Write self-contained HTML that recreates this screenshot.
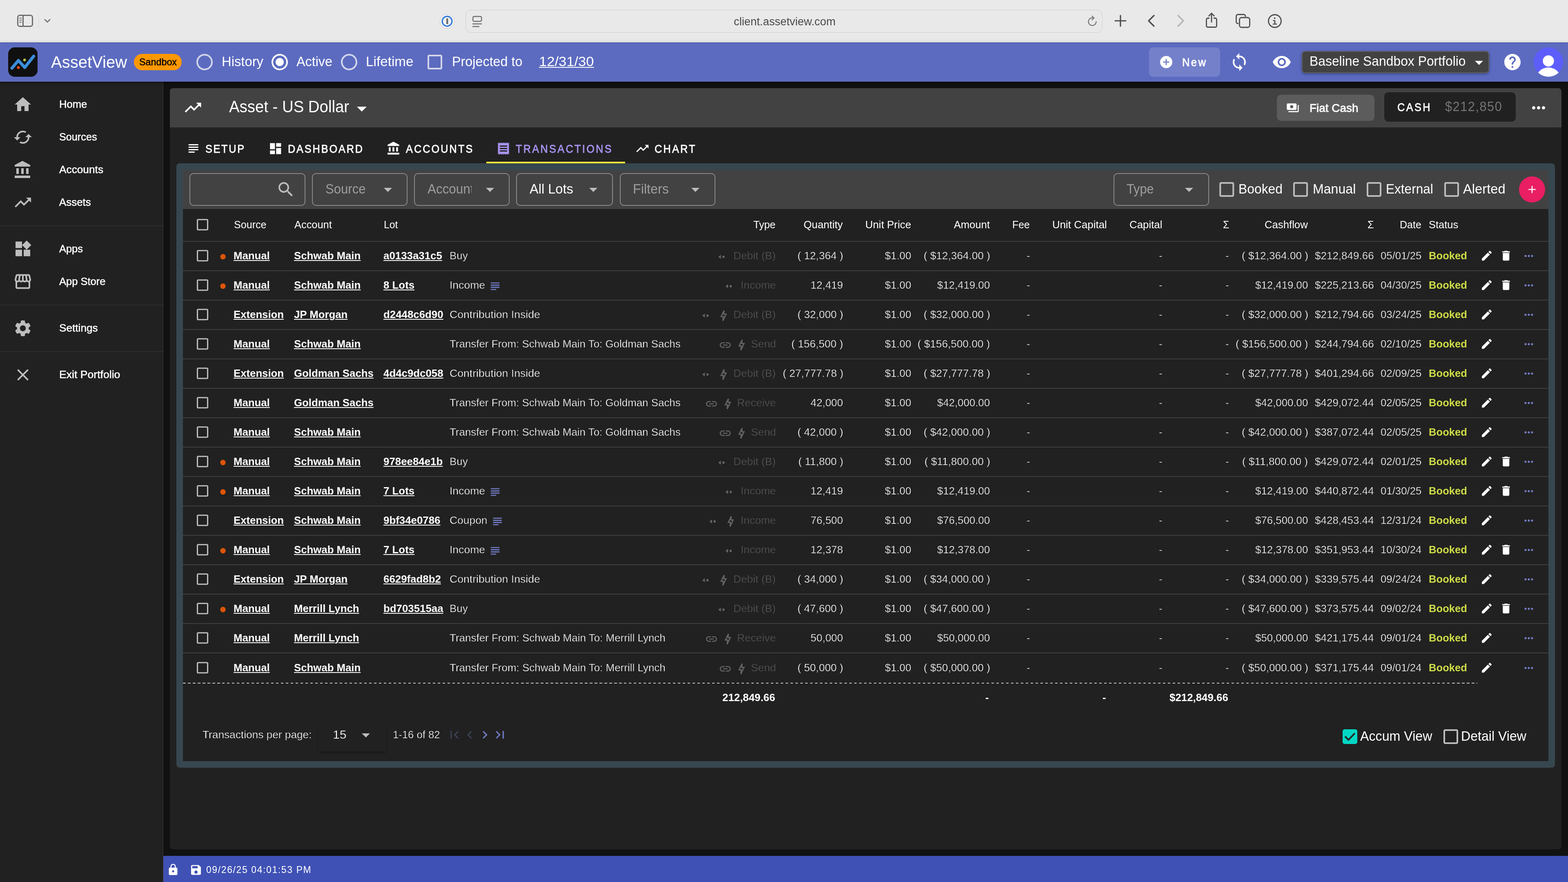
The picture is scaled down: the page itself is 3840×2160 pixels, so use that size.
<!DOCTYPE html>
<html lang="en"><head><meta charset="utf-8"><title>AssetView - Asset - US Dollar - Transactions</title>
<style>html,body{margin:0;padding:0;background:#111;}
body{width:3840px;height:2160px;overflow:hidden;font-family:"Liberation Sans",sans-serif;}
#root{position:relative;width:3840px;height:2160px;overflow:hidden;background:#111;will-change:transform;}
#root div,#root span,#root a,#root svg.i{position:absolute;white-space:nowrap;box-sizing:border-box;}
svg.i{display:block;}
#root .u{text-decoration:underline;text-underline-offset:2.3px;text-decoration-thickness:2.4px;}
.m{-webkit-text-stroke:0.55px currentColor;}
#root div,#root a{transform-origin:0 50%;}
.lt{-webkit-text-stroke:0.42px #212121;}
.ltb{-webkit-text-stroke:0.5px #3f51b5;}
.m2{-webkit-text-stroke:0.9px currentColor;}
</style></head>
<body>
<div id="root">
<div style="left:0px;top:0px;width:3840px;height:104px;background:#e9e9e9;"></div>
<svg class="i" style="left:38px;top:30px;width:48px;height:42px" viewBox="0 0 48 42" fill="none" stroke="#6e6e6e" stroke-width="3" stroke-linecap="round"><rect x="5.500" y="7.500" width="36" height="27" rx="5"/><path d="M18.500 8v26" /><path d="M10 14.500h4.500M10 19.500h4.500M10 24.500h4.500" stroke-width="2.200"/></svg>
<div style="left:94px;top:35px;width:1px;height:35px;background:#d4d4d4;"></div>
<svg class="i" style="left:106px;top:44px;width:20px;height:14px" viewBox="0 0 20 14" fill="none" stroke="#7a7a7a" stroke-width="3" stroke-linecap="round" stroke-linejoin="round"><path d="M4 4l6 6 6-6"/></svg>
<svg class="i" style="left:1077px;top:34px;width:36px;height:36px" viewBox="0 0 36 36"><circle cx="18" cy="18" r="17" fill="#fff" stroke="#bdbdbd" stroke-width="1"/><circle cx="18" cy="18" r="12" fill="#f2f2f2" stroke="#3a7fd6" stroke-width="3.500"/><rect x="16" y="11" width="4.500" height="14" rx="1" fill="#6b6b6b"/></svg>
<div style="left:1140px;top:24px;width:1560px;height:56px;background:#e9e9e9;border:1.500px solid #cdcdcd;border-radius:14px;"></div>
<svg class="i" style="left:1154px;top:36px;width:30px;height:32px" viewBox="0 0 30 32" fill="none" stroke="#6e6e6e" stroke-width="2.400" stroke-linecap="round"><rect x="4.200" y="4.200" width="21" height="12" rx="3"/><path d="M4 22.500h21M4 29h15"/></svg>
<div style="left:1796.80px;top:40px;font-size:27px;line-height:27px;color:#4a4a4a;transform:scaleX(1.0126);">client.assetview.com</div>
<svg class="i" style="left:2660px;top:37px;width:30px;height:30px" viewBox="0 0 30 30" fill="none" stroke="#7a7a7a" stroke-width="2.400" stroke-linecap="round" stroke-linejoin="round"><path d="M24.500 16a9.500 9.500 0 1 1-5.500-8.600"/><path d="M14.500 2.500l5 4.700-5.200 4.300"/></svg>
<svg class="i" style="left:2726px;top:33px;width:36px;height:36px" viewBox="0 0 36 36" fill="none" stroke="#4d4d4d" stroke-width="3.200" stroke-linecap="round"><path d="M18 5v26M5 18h26"/></svg>
<svg class="i" style="left:2804px;top:33px;width:32px;height:36px" viewBox="0 0 32 36" fill="none" stroke="#4d4d4d" stroke-width="3.400" stroke-linecap="round" stroke-linejoin="round"><path d="M22 5L9 18l13 13"/></svg>
<svg class="i" style="left:2875px;top:33px;width:32px;height:36px" viewBox="0 0 32 36" fill="none" stroke="#b4b4b4" stroke-width="3.400" stroke-linecap="round" stroke-linejoin="round"><path d="M10 5l13 13-13 13"/></svg>
<svg class="i" style="left:2948px;top:29px;width:38px;height:42px" viewBox="0 0 38 42" fill="none" stroke="#4d4d4d" stroke-width="2.800" stroke-linecap="round" stroke-linejoin="round"><path d="M13 15.500H9.500a3 3 0 0 0-3 3v16a3 3 0 0 0 3 3h19a3 3 0 0 0 3-3v-16a3 3 0 0 0-3-3H25"/><path d="M19 25V4M12.500 10L19 3.500 25.500 10"/></svg>
<svg class="i" style="left:3023px;top:31px;width:42px;height:40px" viewBox="0 0 42 40" fill="none" stroke="#4d4d4d" stroke-width="2.800" stroke-linejoin="round" stroke-linecap="round"><path d="M9 26.500H8.500a4 4 0 0 1-4-4V8.500a4 4 0 0 1 4-4H23a4 4 0 0 1 4 4V9"/><rect x="12.500" y="12" width="25" height="24" rx="5"/></svg>
<svg class="i" style="left:3103px;top:33px;width:38px;height:38px" viewBox="0 0 38 38" fill="none" stroke="#4d4d4d" stroke-width="2.800" stroke-linecap="round"><circle cx="19" cy="18.500" r="15.500"/><path d="M19 17.500v8.500M15.500 17.500H19M15 26h8" stroke-width="2.600"/><circle cx="18.700" cy="11.500" r="1.900" fill="#4d4d4d" stroke="none"/></svg>
<div style="left:0px;top:200px;width:400px;height:1960px;background:#212121;border-right:1.500px solid #3a3a3a;"></div>
<div style="left:416px;top:216px;width:3408px;height:1864px;background:#212121;border-radius:8px;"></div>
<div style="left:416px;top:216px;width:3408px;height:96px;background:#424242;border-radius:8px 8px 0 0;"></div>
<div style="left:0px;top:104px;width:3840px;height:96px;background:#5c6bc0;border-top:2px solid #4a59ae;box-shadow:0 3px 8px rgba(0,0,0,.5);"></div>
<div style="left:20px;top:116px;width:72px;height:72px;background:#101010;border-radius:16px;"></div>
<svg class="i" style="left:20px;top:116px;width:72px;height:72px" viewBox="20 116 72 72" fill="none"><path d="M29.300 166.800L45 148l15.600 17.200L82.500 137.600" stroke="#3b8edb" stroke-width="7.400" stroke-linecap="round" stroke-linejoin="round"/><circle cx="60.200" cy="146.800" r="3.400" fill="#b9c34e"/><circle cx="45" cy="165.400" r="3.400" fill="#ff4f1c"/></svg>
<div style="left:125.00px;top:132px;font-size:40px;line-height:40px;color:#fff;">AssetView</div>
<div style="left:328px;top:132px;width:117px;height:40px;background:#ff9800;border-radius:20px;"></div>
<div class="m" style="left:340.50px;top:140px;font-size:24px;line-height:24px;color:#000;transform:scaleX(0.9711);">Sandbox</div>
<svg class="i" style="left:477px;top:128px;width:48px;height:48px;fill:#d3d5ea;" viewBox="0 0 48 48"><path transform="translate(0.000 0.000) scale(2.00000)" d="M12 2C6.480 2 2 6.480 2 12s4.480 10 10 10 10-4.480 10-10S17.520 2 12 2zm0 18c-4.420 0-8-3.580-8-8s3.580-8 8-8 8 3.580 8 8-3.580 8-8 8z"/></svg>
<div style="left:542.50px;top:134px;font-size:33px;line-height:33px;color:#fff;transform:scaleX(0.9935);">History</div>
<svg class="i" style="left:661px;top:128px;width:48px;height:48px;fill:#fff;" viewBox="0 0 48 48"><path transform="translate(0.000 0.000) scale(2.00000)" d="M12 7c-2.760 0-5 2.240-5 5s2.240 5 5 5 5-2.240 5-5-2.240-5-5-5zm0-5C6.480 2 2 6.480 2 12s4.480 10 10 10 10-4.480 10-10S17.520 2 12 2zm0 18c-4.420 0-8-3.580-8-8s3.580-8 8-8 8 3.580 8 8-3.580 8-8 8z"/></svg>
<div style="left:726.00px;top:134px;font-size:33px;line-height:33px;color:#fff;transform:scaleX(0.9793);">Active</div>
<svg class="i" style="left:831px;top:128px;width:48px;height:48px;fill:#d3d5ea;" viewBox="0 0 48 48"><path transform="translate(0.000 0.000) scale(2.00000)" d="M12 2C6.480 2 2 6.480 2 12s4.480 10 10 10 10-4.480 10-10S17.520 2 12 2zm0 18c-4.420 0-8-3.580-8-8s3.580-8 8-8 8 3.580 8 8-3.580 8-8 8z"/></svg>
<div style="left:896.00px;top:134px;font-size:33px;line-height:33px;color:#fff;transform:scaleX(1.0083);">Lifetime</div>
<svg class="i" style="left:1041px;top:128px;width:48px;height:48px;fill:#d3d5ea;" viewBox="0 0 48 48"><path transform="translate(0.000 0.000) scale(2.00000)" d="M19 5v14H5V5h14m0-2H5c-1.100 0-2 .9-2 2v14c0 1.100.9 2 2 2h14c1.100 0 2-.9 2-2V5c0-1.100-.9-2-2-2z"/></svg>
<div style="left:1107.00px;top:134px;font-size:33px;line-height:33px;color:#fff;transform:scaleX(0.9796);">Projected to</div>
<div class="u" style="left:1319.50px;top:134px;font-size:33px;line-height:33px;color:#fff;transform:scaleX(1.0472);">12/31/30</div>
<div style="left:2814px;top:116px;width:174px;height:72px;background:#7480ca;border-radius:10px;"></div>
<svg class="i" style="left:2838px;top:134px;width:36px;height:36px;fill:#fff;" viewBox="0 0 36 36"><path transform="translate(0.000 0.000) scale(1.50000)" d="M12 2C6.480 2 2 6.480 2 12s4.480 10 10 10 10-4.480 10-10S17.520 2 12 2zm5 11h-4v4h-2v-4H7v-2h4V7h2v4h4v2z"/></svg>
<div class="m2" style="left:2894.50px;top:139px;font-size:28px;line-height:28px;color:#fff;letter-spacing:3.515px;transform:scaleX(0.9200);">New</div>
<svg class="i" style="left:3011px;top:128px;width:48px;height:48px;fill:#fff;" viewBox="0 0 48 48"><path transform="translate(0.000 0.000) scale(2.00000)" d="M12 4V1L8 5l4 4V6c3.310 0 6 2.690 6 6 0 1.010-.25 1.970-.7 2.800l1.460 1.460C19.540 15.030 20 13.570 20 12c0-4.420-3.580-8-8-8zm0 14c-3.310 0-6-2.690-6-6 0-1.010.25-1.970.7-2.800L5.240 7.740C4.460 8.970 4 10.430 4 12c0 4.420 3.580 8 8 8v3l4-4-4-4v3z"/></svg>
<svg class="i" style="left:3115px;top:128px;width:48px;height:48px;fill:#fff;" viewBox="0 0 48 48"><path transform="translate(0.000 0.000) scale(2.00000)" d="M12 4.500C7 4.500 2.730 7.610 1 12c1.730 4.390 6 7.500 11 7.500s9.270-3.110 11-7.500c-1.730-4.390-6-7.500-11-7.500zM12 17c-2.760 0-5-2.240-5-5s2.240-5 5-5 5 2.240 5 5-2.240 5-5 5zm0-8c-1.660 0-3 1.340-3 3s1.340 3 3 3 3-1.340 3-3-1.340-3-3-3z"/></svg>
<div style="left:3188px;top:125px;width:459px;height:54px;background:#424242;border-radius:8px;border:2px solid #5e5e5e;box-shadow:0 2px 6px rgba(0,0,0,.4);"></div>
<div style="left:3206.50px;top:133px;font-size:33px;line-height:33px;color:#fff;transform:scaleX(0.9653);">Baseline Sandbox Portfolio</div>
<svg class="i" style="left:3598px;top:129px;width:48px;height:48px;fill:#fff;" viewBox="0 0 48 48"><path transform="translate(0.000 0.000) scale(2.00000)" d="M7 10l5 5 5-5z"/></svg>
<svg class="i" style="left:3680px;top:128px;width:48px;height:48px;fill:#fff;" viewBox="0 0 48 48"><path transform="translate(0.000 0.000) scale(2.00000)" d="M12 2C6.480 2 2 6.480 2 12s4.480 10 10 10 10-4.480 10-10S17.520 2 12 2zm1 17h-2v-2h2v2zm2.070-7.750l-.9.92C13.450 12.900 13 13.500 13 15h-2v-.5c0-1.100.45-2.100 1.170-2.830l1.240-1.260c.37-.36.59-.86.59-1.410 0-1.100-.9-2-2-2s-2 .9-2 2H8c0-2.210 1.790-4 4-4s4 1.790 4 4c0 .88-.36 1.680-.93 2.250z"/></svg>
<div style="left:3756px;top:116px;width:72px;height:72px;background:#5d5dfc;border-radius:50%;overflow:hidden;"><svg class="i" style="left:0;top:0;width:72px;height:72px;fill:#fff" viewBox="0 0 72 72"><circle cx="36" cy="33.200" r="13.700"/><ellipse cx="36" cy="74.500" rx="29" ry="25.200"/></svg></div>
<svg class="i" style="left:32px;top:232px;width:48px;height:48px;fill:#bdbdbd;" viewBox="0 0 48 48"><path transform="translate(0.000 0.000) scale(2.00000)" d="M10 20v-6h4v6h5v-8h3L12 3 2 12h3v8z"/></svg>
<div class="m" style="left:144.80px;top:242px;font-size:26px;line-height:26px;color:#fff;transform:scaleX(0.9834);">Home</div>
<svg class="i" style="left:32px;top:312px;width:48px;height:48px;fill:#bdbdbd;" viewBox="0 0 48 48"><path transform="translate(0.000 0.000) scale(2.00000)" d="M19 8l-4 4h3c0 3.31-2.69 6-6 6-1.01 0-1.97-.25-2.8-.7l-1.46 1.46C8.97 19.54 10.43 20 12 20c4.42 0 8-3.58 8-8h3l-4-4zM6 12c0-3.31 2.69-6 6-6 1.01 0 1.97.25 2.8.7l1.46-1.46C15.03 4.46 13.57 4 12 4c-4.42 0-8 3.58-8 8H1l4 4 4-4H6z"/></svg>
<div class="m" style="left:144.80px;top:322px;font-size:26px;line-height:26px;color:#fff;transform:scaleX(0.9699);">Sources</div>
<svg class="i" style="left:32px;top:392px;width:48px;height:48px;fill:#bdbdbd;" viewBox="0 0 48 48"><path transform="translate(0.000 0.000) scale(2.00000)" d="M4 10v7h3v-7H4zm6 0v7h3v-7h-3zM2 22h19v-3H2v3zm14-12v7h3v-7h-3zm-4.500-9L2 6v2h19V6l-9.500-5z"/></svg>
<div class="m" style="left:144.80px;top:402px;font-size:26px;line-height:26px;color:#fff;transform:scaleX(1.0099);">Accounts</div>
<svg class="i" style="left:32px;top:472px;width:48px;height:48px;fill:#bdbdbd;" viewBox="0 0 48 48"><path transform="translate(0.000 0.000) scale(2.00000)" d="M16 6l2.290 2.290-4.880 4.880-4-4L2 16.590 3.410 18l6-6 4 4 6.300-6.290L22 12V6z"/></svg>
<div class="m" style="left:144.80px;top:482px;font-size:26px;line-height:26px;color:#fff;">Assets</div>
<svg class="i" style="left:32px;top:585px;width:48px;height:49px;fill:#bdbdbd;" viewBox="0 0 48 49"><path transform="translate(0.000 0.500) scale(2.00000)" d="M13 13v8h8v-8h-8zM3 21h8v-8H3v8zM3 3v8h8V3H3zm13.660-1.310L11 7.340 16.660 13l5.660-5.660-5.660-5.650z"/></svg>
<div class="m" style="left:144.50px;top:596px;font-size:26px;line-height:26px;color:#fff;transform:scaleX(0.9787);">Apps</div>
<svg class="i" style="left:32px;top:665px;width:48px;height:49px;fill:#bdbdbd;" viewBox="0 0 48 49"><path transform="translate(0.000 0.500) scale(2.00000)" d="M21.900 8.890l-1.050-4.370c-.22-.9-1-1.520-1.910-1.520H5.050c-.9 0-1.690.63-1.900 1.520L2.100 8.890c-.24 1.020-.02 2.060.62 2.880.08.11.19.19.28.29V19c0 1.100.9 2 2 2h14c1.100 0 2-.9 2-2v-6.940c.09-.09.2-.18.28-.28.64-.82.87-1.870.62-2.890zm-2.990-3.900l1.050 4.370c.1.42.01.84-.25 1.170-.14.18-.44.47-.94.47-.61 0-1.140-.49-1.210-1.140L16.980 5l1.930-.01zM13 5h1.960l.54 4.520c.05.39-.07.78-.33 1.070-.22.26-.54.41-.95.41-.67 0-1.220-.59-1.220-1.310V5zM8.490 9.520L9.040 5H11v4.690c0 .72-.55 1.310-1.290 1.310-.34 0-.65-.15-.89-.41-.25-.29-.37-.68-.33-1.070zm-4.450-.16L5.050 5h1.970l-.58 4.860c-.08.65-.6 1.140-1.210 1.140-.49 0-.8-.29-.93-.47-.27-.32-.36-.75-.26-1.170zM5 19v-6.030c.08.01.15.03.23.03.87 0 1.660-.36 2.240-.95.6.6 1.400.95 2.310.95.87 0 1.650-.36 2.230-.93.59.57 1.390.93 2.290.93.84 0 1.640-.35 2.240-.95.58.59 1.370.95 2.240.95.08 0 .15-.02.23-.03V19H5z"/></svg>
<div class="m" style="left:144.50px;top:676px;font-size:26px;line-height:26px;color:#fff;transform:scaleX(0.9816);">App Store</div>
<svg class="i" style="left:32px;top:780px;width:48px;height:48px;fill:#bdbdbd;" viewBox="0 0 48 48"><path transform="translate(0.000 0.000) scale(2.00000)" d="M19.140 12.940c.04-.3.06-.61.06-.94 0-.32-.02-.64-.07-.94l2.030-1.580c.18-.14.23-.41.12-.61l-1.920-3.320c-.12-.22-.37-.29-.59-.22l-2.390.96c-.5-.38-1.030-.7-1.620-.94l-.36-2.540c-.04-.24-.24-.41-.48-.41h-3.840c-.24 0-.43.17-.47.41l-.36 2.540c-.59.24-1.130.57-1.620.94l-2.390-.96c-.22-.08-.47 0-.59.22L2.740 8.870c-.12.21-.08.47.12.61l2.030 1.580c-.05.3-.09.63-.09.94s.02.64.07.94l-2.030 1.580c-.18.14-.23.41-.12.61l1.920 3.320c.12.22.37.29.59.22l2.390-.96c.5.38 1.030.7 1.620.94l.36 2.540c.05.24.24.41.48.41h3.840c.24 0 .44-.17.47-.41l.36-2.540c.59-.24 1.130-.56 1.620-.94l2.390.96c.22.08.47 0 .59-.22l1.920-3.320c.12-.22.07-.47-.12-.61l-2.010-1.580zM12 15.600c-1.980 0-3.600-1.620-3.600-3.600s1.620-3.600 3.600-3.600 3.600 1.620 3.600 3.600-1.620 3.600-3.600 3.600z"/></svg>
<div class="m" style="left:144.50px;top:790px;font-size:26px;line-height:26px;color:#fff;transform:scaleX(1.0081);">Settings</div>
<svg class="i" style="left:32px;top:894px;width:48px;height:48px;fill:#bdbdbd;" viewBox="0 0 48 48"><path transform="translate(0.000 0.000) scale(2.00000)" d="M19 6.410L17.590 5 12 10.590 6.410 5 5 6.410 10.590 12 5 17.590 6.410 19 12 13.410 17.590 19 19 17.590 13.410 12z"/></svg>
<div class="m" style="left:144.50px;top:904px;font-size:26px;line-height:26px;color:#fff;transform:scaleX(1.0237);">Exit Portfolio</div>
<div style="left:0px;top:552px;width:399px;height:2px;background:#2d2d2d;"></div>
<div style="left:0px;top:746px;width:399px;height:2px;background:#2d2d2d;"></div>
<div style="left:0px;top:860px;width:399px;height:2px;background:#2d2d2d;"></div>
<svg class="i" style="left:448px;top:239px;width:49px;height:49px;fill:#fff;" viewBox="0 0 49 49"><path transform="translate(0.500 0.500) scale(2.00000)" d="M16 6l2.290 2.290-4.880 4.880-4-4L2 16.590 3.410 18l6-6 4 4 6.300-6.290L22 12V6z"/></svg>
<div style="left:561.00px;top:241px;font-size:40px;line-height:40px;color:#fff;transform:scaleX(0.9585);">Asset - US Dollar</div>
<svg class="i" style="left:857px;top:237px;width:58px;height:58px;fill:#fff;" viewBox="0 0 58 58"><path transform="translate(0.200 0.200) scale(2.40000)" d="M7 10l5 5 5-5z"/></svg>
<div style="left:3127px;top:232px;width:239px;height:64px;background:#5c5c5c;border-radius:10px;"></div>
<svg class="i" style="left:3150px;top:248px;width:32px;height:32px;fill:#fff;" viewBox="0 0 32 32"><path transform="translate(0.000 0.000) scale(1.33333)" d="M19 14V6c0-1.100-.9-2-2-2H3c-1.100 0-2 .9-2 2v8c0 1.100.9 2 2 2h14c1.100 0 2-.9 2-2zm-9-1c-1.660 0-3-1.340-3-3s1.340-3 3-3 3 1.340 3 3-1.340 3-3 3zm13-6v11c0 1.100-.9 2-2 2H4v-2h17V7h2z"/></svg>
<div class="m2" style="left:3207.00px;top:251px;font-size:28px;line-height:28px;color:#fff;transform:scaleX(0.9974);">Fiat Cash</div>
<div style="left:3390px;top:226px;width:322px;height:72px;background:#212121;border-radius:10px;"></div>
<div class="m2" style="left:3422.30px;top:249px;font-size:28px;line-height:28px;color:#fff;letter-spacing:3.883px;transform:scaleX(0.9000);">CASH</div>
<div style="left:3538.70px;top:244px;font-size:33px;line-height:33px;color:#757575;letter-spacing:1.645px;transform:scaleX(0.9300);">$212,850</div>
<svg class="i" style="left:3744px;top:240px;width:48px;height:48px;fill:#fff;" viewBox="0 0 48 48"><path transform="translate(0.000 0.000) scale(2.00000)" d="M6 10c-1.100 0-2 .9-2 2s.9 2 2 2 2-.9 2-2-.9-2-2-2zm12 0c-1.100 0-2 .9-2 2s.9 2 2 2 2-.9 2-2-.9-2-2-2zm-6 0c-1.100 0-2 .9-2 2s.9 2 2 2 2-.9 2-2-.9-2-2-2z"/></svg>
<svg class="i" style="left:455px;top:345px;width:37px;height:37px;fill:#fff;" viewBox="0 0 37 37"><path transform="translate(0.750 0.500) scale(1.50000)" d="M14 17H4v2h10v-2zm6-8H4v2h16V9zM4 15h16v-2H4v2zM4 5v2h16V5H4z"/></svg>
<div class="m2" style="left:503.00px;top:351px;font-size:28px;line-height:28px;color:#fff;letter-spacing:3.050px;transform:scaleX(0.9000);">SETUP</div>
<svg class="i" style="left:656px;top:346px;width:37px;height:36px;fill:#fff;" viewBox="0 0 37 36"><path transform="translate(0.800 0.000) scale(1.50000)" d="M3 13h8V3H3v10zm0 8h8v-6H3v6zm10 0h8V11h-8v10zm0-18v6h8V3h-8z"/></svg>
<div class="m2" style="left:704.50px;top:351px;font-size:28px;line-height:28px;color:#fff;letter-spacing:3.245px;transform:scaleX(0.9000);">DASHBOARD</div>
<svg class="i" style="left:946px;top:345px;width:37px;height:37px;fill:#fff;" viewBox="0 0 37 37"><path transform="translate(0.200 0.500) scale(1.50000)" d="M4 10v7h3v-7H4zm6 0v7h3v-7h-3zM2 22h19v-3H2v3zm14-12v7h3v-7h-3zm-4.500-9L2 6v2h19V6l-9.500-5z"/></svg>
<div class="m2" style="left:993.75px;top:351px;font-size:28px;line-height:28px;color:#fff;letter-spacing:3.467px;transform:scaleX(0.9000);">ACCOUNTS</div>
<svg class="i" style="left:1215px;top:345px;width:36px;height:37px;fill:#a892ee;" viewBox="0 0 36 37"><path transform="translate(0.000 0.750) scale(1.50000)" d="M18 17H6v-2h12v2zm0-4H6v-2h12v2zm0-4H6V7h12v2zM3 22l1.500-1.500L6 22l1.500-1.500L9 22l1.500-1.500L12 22l1.500-1.500L15 22l1.500-1.500L18 22l1.500-1.500L21 22V2l-1.500 1.500L18 2l-1.500 1.500L15 2l-1.500 1.500L12 2l-1.500 1.500L9 2 7.500 3.500 6 2 4.500 3.500 3 2v20z"/></svg>
<div class="m2" style="left:1262.50px;top:351px;font-size:28px;line-height:28px;color:#a892ee;letter-spacing:3.746px;transform:scaleX(0.9000);">TRANSACTIONS</div>
<svg class="i" style="left:1555px;top:345px;width:37px;height:37px;fill:#fff;" viewBox="0 0 37 37"><path transform="translate(0.200 0.750) scale(1.50000)" d="M16 6l2.290 2.290-4.880 4.880-4-4L2 16.590 3.410 18l6-6 4 4 6.300-6.290L22 12V6z"/></svg>
<div class="m2" style="left:1602.50px;top:351px;font-size:28px;line-height:28px;color:#fff;letter-spacing:3.655px;transform:scaleX(0.9000);">CHART</div>
<div style="left:1190.75px;top:396px;width:340.25px;height:4px;background:#ffeb3b;"></div>
<div style="left:432px;top:400px;width:3376px;height:1480px;background:#37474f;border-radius:8px;"></div>
<div style="left:448px;top:416px;width:3344px;height:1448px;background:#212121;"></div>
<div style="left:448px;top:416px;width:3344px;height:96px;background:#424242;"></div>
<div style="left:464px;top:424px;width:284px;height:80px;border:2px solid #8a8a8a;border-radius:10px;"></div>
<svg class="i" style="left:676px;top:440px;width:48px;height:48px;fill:#bdbdbd;" viewBox="0 0 48 48"><path transform="translate(0.000 0.000) scale(2.00000)" d="M15.500 14h-.79l-.28-.27C15.410 12.590 16 11.110 16 9.500 16 5.910 13.090 3 9.500 3S3 5.910 3 9.500 5.910 16 9.500 16c1.610 0 3.090-.59 4.230-1.570l.27.28v.79l5 4.990L20.490 19l-4.990-5zm-6 0C7.010 14 5 11.990 5 9.500S7.010 5 9.500 5 14 7.010 14 9.500 11.990 14 9.500 14z"/></svg>
<div style="left:764px;top:424px;width:234px;height:80px;border:2px solid #8a8a8a;border-radius:10px;"></div>
<div style="left:797.00px;top:446px;font-size:33px;line-height:33px;color:#9e9e9e;transform:scaleX(0.9421);">Source</div>
<svg class="i" style="left:926px;top:440px;width:48px;height:48px;fill:#bdbdbd;" viewBox="0 0 48 48"><path transform="translate(0.000 0.000) scale(2.00000)" d="M7 10l5 5 5-5z"/></svg>
<div style="left:1014px;top:424px;width:234px;height:80px;border:2px solid #8a8a8a;border-radius:10px;"></div>
<div style="left:1044.6px;top:430px;width:110.6px;height:68px;overflow:hidden">
<div style="left:2.00px;top:16px;font-size:33px;line-height:33px;color:#9e9e9e;transform:scaleX(0.9519);">Account</div>
</div>
<svg class="i" style="left:1176px;top:440px;width:48px;height:48px;fill:#bdbdbd;" viewBox="0 0 48 48"><path transform="translate(0.000 0.000) scale(2.00000)" d="M7 10l5 5 5-5z"/></svg>
<div style="left:1264px;top:424px;width:236.5px;height:80px;border:2px solid #8a8a8a;border-radius:10px;"></div>
<div style="left:1297.00px;top:446px;font-size:33px;line-height:33px;color:#fff;transform:scaleX(0.9860);">All Lots</div>
<svg class="i" style="left:1429px;top:440px;width:48px;height:48px;fill:#bdbdbd;" viewBox="0 0 48 48"><path transform="translate(0.000 0.000) scale(2.00000)" d="M7 10l5 5 5-5z"/></svg>
<div style="left:1517.5px;top:424px;width:234px;height:80px;border:2px solid #8a8a8a;border-radius:10px;"></div>
<div style="left:1550.30px;top:446px;font-size:33px;line-height:33px;color:#9e9e9e;transform:scaleX(0.9797);">Filters</div>
<svg class="i" style="left:1679px;top:440px;width:48px;height:48px;fill:#bdbdbd;" viewBox="0 0 48 48"><path transform="translate(0.000 0.000) scale(2.00000)" d="M7 10l5 5 5-5z"/></svg>
<div style="left:2726.5px;top:424px;width:234px;height:80px;border:2px solid #8a8a8a;border-radius:10px;"></div>
<div style="left:2759.30px;top:446px;font-size:33px;line-height:33px;color:#9e9e9e;transform:scaleX(0.9296);">Type</div>
<svg class="i" style="left:2888px;top:440px;width:48px;height:48px;fill:#bdbdbd;" viewBox="0 0 48 48"><path transform="translate(0.000 0.000) scale(2.00000)" d="M7 10l5 5 5-5z"/></svg>
<svg class="i" style="left:2980px;top:440px;width:49px;height:48px;fill:#bdbdbd;" viewBox="0 0 49 48"><path transform="translate(0.300 0.000) scale(2.00000)" d="M19 5v14H5V5h14m0-2H5c-1.100 0-2 .9-2 2v14c0 1.100.9 2 2 2h14c1.100 0 2-.9 2-2V5c0-1.100-.9-2-2-2z"/></svg>
<div style="left:3033.00px;top:446px;font-size:33px;line-height:33px;color:#fff;transform:scaleX(0.9650);">Booked</div>
<svg class="i" style="left:3161px;top:440px;width:48px;height:48px;fill:#bdbdbd;" viewBox="0 0 48 48"><path transform="translate(0.000 0.000) scale(2.00000)" d="M19 5v14H5V5h14m0-2H5c-1.100 0-2 .9-2 2v14c0 1.100.9 2 2 2h14c1.100 0 2-.9 2-2V5c0-1.100-.9-2-2-2z"/></svg>
<div style="left:3214.70px;top:446px;font-size:33px;line-height:33px;color:#fff;transform:scaleX(0.9730);">Manual</div>
<svg class="i" style="left:3341px;top:440px;width:48px;height:48px;fill:#bdbdbd;" viewBox="0 0 48 48"><path transform="translate(0.000 0.000) scale(2.00000)" d="M19 5v14H5V5h14m0-2H5c-1.100 0-2 .9-2 2v14c0 1.100.9 2 2 2h14c1.100 0 2-.9 2-2V5c0-1.100-.9-2-2-2z"/></svg>
<div style="left:3394.00px;top:446px;font-size:33px;line-height:33px;color:#fff;transform:scaleX(0.9566);">External</div>
<svg class="i" style="left:3531px;top:440px;width:48px;height:48px;fill:#bdbdbd;" viewBox="0 0 48 48"><path transform="translate(0.000 0.000) scale(2.00000)" d="M19 5v14H5V5h14m0-2H5c-1.100 0-2 .9-2 2v14c0 1.100.9 2 2 2h14c1.100 0 2-.9 2-2V5c0-1.100-.9-2-2-2z"/></svg>
<div style="left:3583.40px;top:446px;font-size:33px;line-height:33px;color:#fff;transform:scaleX(0.9909);">Alerted</div>
<div style="left:3720px;top:432px;width:64px;height:64px;background:#e91e63;border-radius:50%;"></div>
<svg class="i" style="left:3740px;top:452px;width:24px;height:24px" viewBox="0 0 24 24" fill="none" stroke="#fff" stroke-width="2.600"><path d="M12 3.200v17.600M3.200 12h17.600"/></svg>
<svg class="i" style="left:477px;top:531px;width:38px;height:38px;fill:#bdbdbd;" viewBox="0 0 38 38"><path transform="translate(0.250 0.500) scale(1.56250)" d="M19 5v14H5V5h14m0-2H5c-1.100 0-2 .9-2 2v14c0 1.100.9 2 2 2h14c1.100 0 2-.9 2-2V5c0-1.100-.9-2-2-2z"/></svg>
<div style="left:573.00px;top:537px;font-size:26px;line-height:26px;color:#fff;transform:scaleX(0.9651);">Source</div>
<div style="left:720.75px;top:537px;font-size:26px;line-height:26px;color:#fff;transform:scaleX(0.9767);">Account</div>
<div style="left:940.00px;top:537px;font-size:26px;line-height:26px;color:#fff;transform:scaleX(0.9546);">Lot</div>
<div style="left:1845.20px;top:537px;font-size:26px;line-height:26px;color:#fff;transform:scaleX(0.9616);">Type</div>
<div style="left:1968.00px;top:537px;font-size:26px;line-height:26px;color:#fff;transform:scaleX(0.9915);">Quantity</div>
<div style="left:2119.00px;top:537px;font-size:26px;line-height:26px;color:#fff;transform:scaleX(0.9965);">Unit Price</div>
<div style="left:2336.00px;top:537px;font-size:26px;line-height:26px;color:#fff;transform:scaleX(0.9822);">Amount</div>
<div style="left:2479.30px;top:537px;font-size:26px;line-height:26px;color:#fff;transform:scaleX(0.9532);">Fee</div>
<div style="left:2577.00px;top:537px;font-size:26px;line-height:26px;color:#fff;transform:scaleX(0.9956);">Unit Capital</div>
<div style="left:2765.50px;top:537px;font-size:26px;line-height:26px;color:#fff;transform:scaleX(0.9947);">Capital</div>
<div style="left:2994.70px;top:537px;font-size:26px;line-height:26px;color:#fff;transform:scaleX(0.9520);">Σ</div>
<div style="left:3097.00px;top:537px;font-size:26px;line-height:26px;color:#fff;transform:scaleX(0.9885);">Cashflow</div>
<div style="left:3349.00px;top:537px;font-size:26px;line-height:26px;color:#fff;transform:scaleX(0.9582);">Σ</div>
<div style="left:3427.50px;top:537px;font-size:26px;line-height:26px;color:#fff;transform:scaleX(0.9651);">Date</div>
<div style="left:3498.70px;top:537px;font-size:26px;line-height:26px;color:#fff;transform:scaleX(0.9809);">Status</div>
<div style="left:448px;top:590px;width:3344px;height:2px;background:#3f3f3f;"></div>
<svg class="i" style="left:477px;top:607px;width:38px;height:38px;fill:#bdbdbd;" viewBox="0 0 38 38"><path transform="translate(0.250 0.450) scale(1.56250)" d="M19 5v14H5V5h14m0-2H5c-1.100 0-2 .9-2 2v14c0 1.100.9 2 2 2h14c1.100 0 2-.9 2-2V5c0-1.100-.9-2-2-2z"/></svg>
<svg class="i" style="left:536px;top:618px;width:20px;height:22px" viewBox="0 0 20 22"><circle cx="10" cy="10.75" r="6.700" fill="#dc5508"/></svg>
<a class="u" style="left:571.70px;top:614px;font-size:25px;line-height:25px;color:#fff;font-weight:700;transform:scaleX(1.0300);">Manual</a>
<a class="u" style="left:719.50px;top:614px;font-size:25px;line-height:25px;color:#fff;font-weight:700;transform:scaleX(1.0310);">Schwab Main</a>
<a class="u" style="left:938.50px;top:614px;font-size:25px;line-height:25px;color:#fff;font-weight:700;transform:scaleX(1.0340);">a0133a31c5</a>
<div class="lt" style="left:1101.30px;top:614px;font-size:25px;line-height:25px;color:#ffffff;transform:scaleX(1.0360);">Buy</div>
<div class="lt" style="left:1796.44px;top:614px;font-size:25px;line-height:25px;color:#565656;transform:scaleX(1.0520);">Debit (B)</div>
<svg class="i" style="left:1757px;top:621px;width:22px;height:18px" viewBox="0 0 22 18" fill="#646464"><g transform="translate(0.19 0.00)"><path d="M8.200 3v10L2 8z"/><circle cx="14.600" cy="8" r="2.900"/></g></svg>
<div class="lt" style="left:1952.98px;top:614px;font-size:25px;line-height:25px;color:#ffffff;transform:scaleX(1.0470);">( 12,364 )</div>
<div class="lt" style="left:2166.74px;top:614px;font-size:25px;line-height:25px;color:#ffffff;transform:scaleX(1.0320);">$1.00</div>
<div class="lt" style="left:2261.84px;top:614px;font-size:25px;line-height:25px;color:#ffffff;transform:scaleX(1.0470);">( $12,364.00 )</div>
<div class="lt" style="left:2514.41px;top:614px;font-size:25px;line-height:25px;color:#ffffff;transform:scaleX(1.0320);">-</div>
<div class="lt" style="left:2837.91px;top:614px;font-size:25px;line-height:25px;color:#ffffff;transform:scaleX(1.0320);">-</div>
<div class="lt" style="left:3001.41px;top:614px;font-size:25px;line-height:25px;color:#ffffff;transform:scaleX(1.0320);">-</div>
<div class="lt" style="left:3040.54px;top:614px;font-size:25px;line-height:25px;color:#ffffff;transform:scaleX(1.0470);">( $12,364.00 )</div>
<div class="lt" style="left:3219.63px;top:614px;font-size:25px;line-height:25px;color:#ffffff;transform:scaleX(1.0400);">$212,849.66</div>
<div class="lt" style="left:3380.88px;top:614px;font-size:25px;line-height:25px;color:#ffffff;transform:scaleX(1.0320);">05/01/25</div>
<div style="left:3498.70px;top:614px;font-size:25px;line-height:25px;color:#cedc47;font-weight:700;transform:scaleX(1.0254);">Booked</div>
<svg class="i" style="left:3625px;top:610px;width:32px;height:33px;fill:#fff;" viewBox="0 0 32 33"><path transform="translate(0.000 0.200) scale(1.33333)" d="M3 17.250V21h3.750L17.810 9.940l-3.750-3.750L3 17.250zM20.710 7.040c.39-.39.39-1.020 0-1.410l-2.340-2.340c-.39-.39-1.020-.39-1.410 0l-1.830 1.830 3.750 3.750 1.830-1.830z"/></svg>
<svg class="i" style="left:3672px;top:610px;width:33px;height:33px;fill:#fff;" viewBox="0 0 33 33"><path transform="translate(0.300 0.200) scale(1.33333)" d="M6 19c0 1.100.9 2 2 2h8c1.100 0 2-.9 2-2V7H6v12zM19 4h-3.500l-1-1h-5l-1 1H5v2h14V4z"/></svg>
<svg class="i" style="left:3728px;top:610px;width:32px;height:33px;fill:#747ec7;" viewBox="0 0 32 33"><path transform="translate(0.000 0.800) scale(1.33333)" d="M6 10c-1.100 0-2 .9-2 2s.9 2 2 2 2-.9 2-2-.9-2-2-2zm12 0c-1.100 0-2 .9-2 2s.9 2 2 2 2-.9 2-2-.9-2-2-2zm-6 0c-1.100 0-2 .9-2 2s.9 2 2 2 2-.9 2-2-.9-2-2-2z"/></svg>
<div style="left:448px;top:662px;width:3344px;height:2px;background:#3f3f3f;"></div>
<svg class="i" style="left:477px;top:679px;width:38px;height:38px;fill:#bdbdbd;" viewBox="0 0 38 38"><path transform="translate(0.250 0.450) scale(1.56250)" d="M19 5v14H5V5h14m0-2H5c-1.100 0-2 .9-2 2v14c0 1.100.9 2 2 2h14c1.100 0 2-.9 2-2V5c0-1.100-.9-2-2-2z"/></svg>
<svg class="i" style="left:536px;top:690px;width:20px;height:22px" viewBox="0 0 20 22"><circle cx="10" cy="10.75" r="6.700" fill="#dc5508"/></svg>
<a class="u" style="left:571.70px;top:686px;font-size:25px;line-height:25px;color:#fff;font-weight:700;transform:scaleX(1.0300);">Manual</a>
<a class="u" style="left:719.50px;top:686px;font-size:25px;line-height:25px;color:#fff;font-weight:700;transform:scaleX(1.0310);">Schwab Main</a>
<a class="u" style="left:938.50px;top:686px;font-size:25px;line-height:25px;color:#fff;font-weight:700;transform:scaleX(1.0340);">8 Lots</a>
<div class="lt" style="left:1101.30px;top:686px;font-size:25px;line-height:25px;color:#ffffff;transform:scaleX(1.0610);">Income</div>
<svg class="i" style="left:1196px;top:685px;width:33px;height:32px;fill:#747ec7;" viewBox="0 0 33 32"><path transform="translate(0.577 0.000) scale(1.33333)" d="M14 17H4v2h10v-2zm6-8H4v2h16V9zM4 15h16v-2H4v2zM4 5v2h16V5H4z"/></svg>
<div class="lt" style="left:1813.96px;top:686px;font-size:25px;line-height:25px;color:#565656;transform:scaleX(1.0520);">Income</div>
<svg class="i" style="left:1774px;top:693px;width:22px;height:18px" viewBox="0 0 22 18" fill="#646464"><g transform="translate(0.71 0.00)"><path d="M8.200 3v10L2 8z"/><circle cx="14.600" cy="8" r="2.900"/></g></svg>
<div class="lt" style="left:1985.48px;top:686px;font-size:25px;line-height:25px;color:#ffffff;transform:scaleX(1.0400);">12,419</div>
<div class="lt" style="left:2166.74px;top:686px;font-size:25px;line-height:25px;color:#ffffff;transform:scaleX(1.0320);">$1.00</div>
<div class="lt" style="left:2295.44px;top:686px;font-size:25px;line-height:25px;color:#ffffff;transform:scaleX(1.0340);">$12,419.00</div>
<div class="lt" style="left:2514.41px;top:686px;font-size:25px;line-height:25px;color:#ffffff;transform:scaleX(1.0320);">-</div>
<div class="lt" style="left:2837.91px;top:686px;font-size:25px;line-height:25px;color:#ffffff;transform:scaleX(1.0320);">-</div>
<div class="lt" style="left:3001.41px;top:686px;font-size:25px;line-height:25px;color:#ffffff;transform:scaleX(1.0320);">-</div>
<div class="lt" style="left:3074.14px;top:686px;font-size:25px;line-height:25px;color:#ffffff;transform:scaleX(1.0340);">$12,419.00</div>
<div class="lt" style="left:3219.63px;top:686px;font-size:25px;line-height:25px;color:#ffffff;transform:scaleX(1.0400);">$225,213.66</div>
<div class="lt" style="left:3380.88px;top:686px;font-size:25px;line-height:25px;color:#ffffff;transform:scaleX(1.0320);">04/30/25</div>
<div style="left:3498.70px;top:686px;font-size:25px;line-height:25px;color:#cedc47;font-weight:700;transform:scaleX(1.0254);">Booked</div>
<svg class="i" style="left:3625px;top:682px;width:32px;height:33px;fill:#fff;" viewBox="0 0 32 33"><path transform="translate(0.000 0.200) scale(1.33333)" d="M3 17.250V21h3.750L17.810 9.940l-3.750-3.750L3 17.250zM20.710 7.040c.39-.39.39-1.020 0-1.410l-2.340-2.340c-.39-.39-1.020-.39-1.410 0l-1.830 1.830 3.750 3.750 1.830-1.830z"/></svg>
<svg class="i" style="left:3672px;top:682px;width:33px;height:33px;fill:#fff;" viewBox="0 0 33 33"><path transform="translate(0.300 0.200) scale(1.33333)" d="M6 19c0 1.100.9 2 2 2h8c1.100 0 2-.9 2-2V7H6v12zM19 4h-3.500l-1-1h-5l-1 1H5v2h14V4z"/></svg>
<svg class="i" style="left:3728px;top:682px;width:32px;height:33px;fill:#747ec7;" viewBox="0 0 32 33"><path transform="translate(0.000 0.800) scale(1.33333)" d="M6 10c-1.100 0-2 .9-2 2s.9 2 2 2 2-.9 2-2-.9-2-2-2zm12 0c-1.100 0-2 .9-2 2s.9 2 2 2 2-.9 2-2-.9-2-2-2zm-6 0c-1.100 0-2 .9-2 2s.9 2 2 2 2-.9 2-2-.9-2-2-2z"/></svg>
<div style="left:448px;top:734px;width:3344px;height:2px;background:#3f3f3f;"></div>
<svg class="i" style="left:477px;top:751px;width:38px;height:38px;fill:#bdbdbd;" viewBox="0 0 38 38"><path transform="translate(0.250 0.450) scale(1.56250)" d="M19 5v14H5V5h14m0-2H5c-1.100 0-2 .9-2 2v14c0 1.100.9 2 2 2h14c1.100 0 2-.9 2-2V5c0-1.100-.9-2-2-2z"/></svg>
<a class="u" style="left:571.70px;top:758px;font-size:25px;line-height:25px;color:#fff;font-weight:700;transform:scaleX(1.0300);">Extension</a>
<a class="u" style="left:719.50px;top:758px;font-size:25px;line-height:25px;color:#fff;font-weight:700;transform:scaleX(1.0310);">JP Morgan</a>
<a class="u" style="left:938.50px;top:758px;font-size:25px;line-height:25px;color:#fff;font-weight:700;transform:scaleX(1.0340);">d2448c6d90</a>
<div class="lt" style="left:1101.30px;top:758px;font-size:25px;line-height:25px;color:#ffffff;transform:scaleX(1.0639);">Contribution Inside</div>
<div class="lt" style="left:1796.44px;top:758px;font-size:25px;line-height:25px;color:#565656;transform:scaleX(1.0520);">Debit (B)</div>
<svg class="i" style="left:1761px;top:757px;width:22px;height:34px" viewBox="0 0 22 34" fill="none" stroke="#646464" stroke-width="2.700" stroke-linejoin="miter"><path transform="translate(0.94 0.00)" d="M11.400 3.400L4 18.400h5.400L8.400 28.600l7.800-16.200h-5.600z"/></svg>
<svg class="i" style="left:1717px;top:765px;width:22px;height:18px" viewBox="0 0 22 18" fill="#646464"><g transform="translate(0.94 0.00)"><path d="M8.200 3v10L2 8z"/><circle cx="14.600" cy="8" r="2.900"/></g></svg>
<div class="lt" style="left:1952.98px;top:758px;font-size:25px;line-height:25px;color:#ffffff;transform:scaleX(1.0470);">( 32,000 )</div>
<div class="lt" style="left:2166.74px;top:758px;font-size:25px;line-height:25px;color:#ffffff;transform:scaleX(1.0320);">$1.00</div>
<div class="lt" style="left:2261.84px;top:758px;font-size:25px;line-height:25px;color:#ffffff;transform:scaleX(1.0470);">( $32,000.00 )</div>
<div class="lt" style="left:2514.41px;top:758px;font-size:25px;line-height:25px;color:#ffffff;transform:scaleX(1.0320);">-</div>
<div class="lt" style="left:2837.91px;top:758px;font-size:25px;line-height:25px;color:#ffffff;transform:scaleX(1.0320);">-</div>
<div class="lt" style="left:3001.41px;top:758px;font-size:25px;line-height:25px;color:#ffffff;transform:scaleX(1.0320);">-</div>
<div class="lt" style="left:3040.54px;top:758px;font-size:25px;line-height:25px;color:#ffffff;transform:scaleX(1.0470);">( $32,000.00 )</div>
<div class="lt" style="left:3219.63px;top:758px;font-size:25px;line-height:25px;color:#ffffff;transform:scaleX(1.0400);">$212,794.66</div>
<div class="lt" style="left:3380.88px;top:758px;font-size:25px;line-height:25px;color:#ffffff;transform:scaleX(1.0320);">03/24/25</div>
<div style="left:3498.70px;top:758px;font-size:25px;line-height:25px;color:#cedc47;font-weight:700;transform:scaleX(1.0254);">Booked</div>
<svg class="i" style="left:3625px;top:754px;width:32px;height:33px;fill:#fff;" viewBox="0 0 32 33"><path transform="translate(0.000 0.200) scale(1.33333)" d="M3 17.250V21h3.750L17.810 9.940l-3.750-3.750L3 17.250zM20.710 7.040c.39-.39.39-1.020 0-1.410l-2.340-2.340c-.39-.39-1.020-.39-1.410 0l-1.830 1.830 3.750 3.750 1.830-1.830z"/></svg>
<svg class="i" style="left:3728px;top:754px;width:32px;height:33px;fill:#747ec7;" viewBox="0 0 32 33"><path transform="translate(0.000 0.800) scale(1.33333)" d="M6 10c-1.100 0-2 .9-2 2s.9 2 2 2 2-.9 2-2-.9-2-2-2zm12 0c-1.100 0-2 .9-2 2s.9 2 2 2 2-.9 2-2-.9-2-2-2zm-6 0c-1.100 0-2 .9-2 2s.9 2 2 2 2-.9 2-2-.9-2-2-2z"/></svg>
<div style="left:448px;top:806px;width:3344px;height:2px;background:#3f3f3f;"></div>
<svg class="i" style="left:477px;top:823px;width:38px;height:38px;fill:#bdbdbd;" viewBox="0 0 38 38"><path transform="translate(0.250 0.450) scale(1.56250)" d="M19 5v14H5V5h14m0-2H5c-1.100 0-2 .9-2 2v14c0 1.100.9 2 2 2h14c1.100 0 2-.9 2-2V5c0-1.100-.9-2-2-2z"/></svg>
<a class="u" style="left:571.70px;top:830px;font-size:25px;line-height:25px;color:#fff;font-weight:700;transform:scaleX(1.0300);">Manual</a>
<a class="u" style="left:719.50px;top:830px;font-size:25px;line-height:25px;color:#fff;font-weight:700;transform:scaleX(1.0310);">Schwab Main</a>
<div class="lt" style="left:1101.30px;top:830px;font-size:25px;line-height:25px;color:#ffffff;transform:scaleX(1.0360);">Transfer From: Schwab Main To: Goldman Sachs</div>
<div class="lt" style="left:1838.78px;top:830px;font-size:25px;line-height:25px;color:#565656;transform:scaleX(1.0520);">Send</div>
<svg class="i" style="left:1805px;top:829px;width:22px;height:34px" viewBox="0 0 22 34" fill="none" stroke="#646464" stroke-width="2.700" stroke-linejoin="miter"><path transform="translate(0.98 0.00)" d="M11.400 3.400L4 18.400h5.400L8.400 28.600l7.800-16.200h-5.600z"/></svg>
<svg class="i" style="left:1760px;top:829px;width:33px;height:32px;fill:#646464;" viewBox="0 0 33 32"><path transform="translate(0.081 0.000) scale(1.33333)" d="M3.900 12c0-1.710 1.390-3.100 3.100-3.100h4V7H7c-2.760 0-5 2.240-5 5s2.240 5 5 5h4v-1.900H7c-1.710 0-3.100-1.390-3.100-3.100zM8 13h8v-2H8v2zm9-6h-4v1.900h4c1.710 0 3.100 1.390 3.100 3.100s-1.390 3.100-3.100 3.100h-4V17h4c2.760 0 5-2.240 5-5s-2.240-5-5-5z"/></svg>
<div class="lt" style="left:1938.42px;top:830px;font-size:25px;line-height:25px;color:#ffffff;transform:scaleX(1.0470);">( 156,500 )</div>
<div class="lt" style="left:2166.74px;top:830px;font-size:25px;line-height:25px;color:#ffffff;transform:scaleX(1.0320);">$1.00</div>
<div class="lt" style="left:2247.28px;top:830px;font-size:25px;line-height:25px;color:#ffffff;transform:scaleX(1.0470);">( $156,500.00 )</div>
<div class="lt" style="left:2514.41px;top:830px;font-size:25px;line-height:25px;color:#ffffff;transform:scaleX(1.0320);">-</div>
<div class="lt" style="left:2837.91px;top:830px;font-size:25px;line-height:25px;color:#ffffff;transform:scaleX(1.0320);">-</div>
<div class="lt" style="left:3001.41px;top:830px;font-size:25px;line-height:25px;color:#ffffff;transform:scaleX(1.0320);">-</div>
<div class="lt" style="left:3025.98px;top:830px;font-size:25px;line-height:25px;color:#ffffff;transform:scaleX(1.0470);">( $156,500.00 )</div>
<div class="lt" style="left:3219.63px;top:830px;font-size:25px;line-height:25px;color:#ffffff;transform:scaleX(1.0400);">$244,794.66</div>
<div class="lt" style="left:3380.88px;top:830px;font-size:25px;line-height:25px;color:#ffffff;transform:scaleX(1.0320);">02/10/25</div>
<div style="left:3498.70px;top:830px;font-size:25px;line-height:25px;color:#cedc47;font-weight:700;transform:scaleX(1.0254);">Booked</div>
<svg class="i" style="left:3625px;top:826px;width:32px;height:33px;fill:#fff;" viewBox="0 0 32 33"><path transform="translate(0.000 0.200) scale(1.33333)" d="M3 17.250V21h3.750L17.810 9.940l-3.750-3.750L3 17.250zM20.710 7.040c.39-.39.39-1.020 0-1.410l-2.340-2.340c-.39-.39-1.020-.39-1.410 0l-1.830 1.830 3.750 3.750 1.830-1.830z"/></svg>
<svg class="i" style="left:3728px;top:826px;width:32px;height:33px;fill:#747ec7;" viewBox="0 0 32 33"><path transform="translate(0.000 0.800) scale(1.33333)" d="M6 10c-1.100 0-2 .9-2 2s.9 2 2 2 2-.9 2-2-.9-2-2-2zm12 0c-1.100 0-2 .9-2 2s.9 2 2 2 2-.9 2-2-.9-2-2-2zm-6 0c-1.100 0-2 .9-2 2s.9 2 2 2 2-.9 2-2-.9-2-2-2z"/></svg>
<div style="left:448px;top:878px;width:3344px;height:2px;background:#3f3f3f;"></div>
<svg class="i" style="left:477px;top:895px;width:38px;height:38px;fill:#bdbdbd;" viewBox="0 0 38 38"><path transform="translate(0.250 0.450) scale(1.56250)" d="M19 5v14H5V5h14m0-2H5c-1.100 0-2 .9-2 2v14c0 1.100.9 2 2 2h14c1.100 0 2-.9 2-2V5c0-1.100-.9-2-2-2z"/></svg>
<a class="u" style="left:571.70px;top:902px;font-size:25px;line-height:25px;color:#fff;font-weight:700;transform:scaleX(1.0300);">Extension</a>
<a class="u" style="left:719.50px;top:902px;font-size:25px;line-height:25px;color:#fff;font-weight:700;transform:scaleX(1.0310);">Goldman Sachs</a>
<a class="u" style="left:938.50px;top:902px;font-size:25px;line-height:25px;color:#fff;font-weight:700;transform:scaleX(1.0340);">4d4c9dc058</a>
<div class="lt" style="left:1101.30px;top:902px;font-size:25px;line-height:25px;color:#ffffff;transform:scaleX(1.0639);">Contribution Inside</div>
<div class="lt" style="left:1796.44px;top:902px;font-size:25px;line-height:25px;color:#565656;transform:scaleX(1.0520);">Debit (B)</div>
<svg class="i" style="left:1761px;top:901px;width:22px;height:34px" viewBox="0 0 22 34" fill="none" stroke="#646464" stroke-width="2.700" stroke-linejoin="miter"><path transform="translate(0.94 0.00)" d="M11.400 3.400L4 18.400h5.400L8.400 28.600l7.800-16.200h-5.600z"/></svg>
<svg class="i" style="left:1717px;top:909px;width:22px;height:18px" viewBox="0 0 22 18" fill="#646464"><g transform="translate(0.94 0.00)"><path d="M8.200 3v10L2 8z"/><circle cx="14.600" cy="8" r="2.900"/></g></svg>
<div class="lt" style="left:1916.59px;top:902px;font-size:25px;line-height:25px;color:#ffffff;transform:scaleX(1.0470);">( 27,777.78 )</div>
<div class="lt" style="left:2166.74px;top:902px;font-size:25px;line-height:25px;color:#ffffff;transform:scaleX(1.0320);">$1.00</div>
<div class="lt" style="left:2261.84px;top:902px;font-size:25px;line-height:25px;color:#ffffff;transform:scaleX(1.0470);">( $27,777.78 )</div>
<div class="lt" style="left:2514.41px;top:902px;font-size:25px;line-height:25px;color:#ffffff;transform:scaleX(1.0320);">-</div>
<div class="lt" style="left:2837.91px;top:902px;font-size:25px;line-height:25px;color:#ffffff;transform:scaleX(1.0320);">-</div>
<div class="lt" style="left:3001.41px;top:902px;font-size:25px;line-height:25px;color:#ffffff;transform:scaleX(1.0320);">-</div>
<div class="lt" style="left:3040.54px;top:902px;font-size:25px;line-height:25px;color:#ffffff;transform:scaleX(1.0470);">( $27,777.78 )</div>
<div class="lt" style="left:3219.63px;top:902px;font-size:25px;line-height:25px;color:#ffffff;transform:scaleX(1.0400);">$401,294.66</div>
<div class="lt" style="left:3380.88px;top:902px;font-size:25px;line-height:25px;color:#ffffff;transform:scaleX(1.0320);">02/09/25</div>
<div style="left:3498.70px;top:902px;font-size:25px;line-height:25px;color:#cedc47;font-weight:700;transform:scaleX(1.0254);">Booked</div>
<svg class="i" style="left:3625px;top:898px;width:32px;height:33px;fill:#fff;" viewBox="0 0 32 33"><path transform="translate(0.000 0.200) scale(1.33333)" d="M3 17.250V21h3.750L17.810 9.940l-3.750-3.750L3 17.250zM20.710 7.040c.39-.39.39-1.020 0-1.410l-2.340-2.340c-.39-.39-1.020-.39-1.410 0l-1.830 1.830 3.750 3.750 1.830-1.830z"/></svg>
<svg class="i" style="left:3728px;top:898px;width:32px;height:33px;fill:#747ec7;" viewBox="0 0 32 33"><path transform="translate(0.000 0.800) scale(1.33333)" d="M6 10c-1.100 0-2 .9-2 2s.9 2 2 2 2-.9 2-2-.9-2-2-2zm12 0c-1.100 0-2 .9-2 2s.9 2 2 2 2-.9 2-2-.9-2-2-2zm-6 0c-1.100 0-2 .9-2 2s.9 2 2 2 2-.9 2-2-.9-2-2-2z"/></svg>
<div style="left:448px;top:950px;width:3344px;height:2px;background:#3f3f3f;"></div>
<svg class="i" style="left:477px;top:967px;width:38px;height:38px;fill:#bdbdbd;" viewBox="0 0 38 38"><path transform="translate(0.250 0.450) scale(1.56250)" d="M19 5v14H5V5h14m0-2H5c-1.100 0-2 .9-2 2v14c0 1.100.9 2 2 2h14c1.100 0 2-.9 2-2V5c0-1.100-.9-2-2-2z"/></svg>
<a class="u" style="left:571.70px;top:974px;font-size:25px;line-height:25px;color:#fff;font-weight:700;transform:scaleX(1.0300);">Manual</a>
<a class="u" style="left:719.50px;top:974px;font-size:25px;line-height:25px;color:#fff;font-weight:700;transform:scaleX(1.0310);">Goldman Sachs</a>
<div class="lt" style="left:1101.30px;top:974px;font-size:25px;line-height:25px;color:#ffffff;transform:scaleX(1.0360);">Transfer From: Schwab Main To: Goldman Sachs</div>
<div class="lt" style="left:1805.19px;top:974px;font-size:25px;line-height:25px;color:#565656;transform:scaleX(1.0520);">Receive</div>
<svg class="i" style="left:1772px;top:973px;width:22px;height:34px" viewBox="0 0 22 34" fill="none" stroke="#646464" stroke-width="2.700" stroke-linejoin="miter"><path transform="translate(0.39 0.00)" d="M11.400 3.400L4 18.400h5.400L8.400 28.600l7.800-16.200h-5.600z"/></svg>
<svg class="i" style="left:1726px;top:973px;width:33px;height:32px;fill:#646464;" viewBox="0 0 33 32"><path transform="translate(0.487 0.000) scale(1.33333)" d="M3.900 12c0-1.710 1.390-3.100 3.100-3.100h4V7H7c-2.760 0-5 2.240-5 5s2.240 5 5 5h4v-1.900H7c-1.710 0-3.100-1.390-3.100-3.100zM8 13h8v-2H8v2zm9-6h-4v1.900h4c1.710 0 3.100 1.390 3.100 3.100s-1.390 3.100-3.100 3.100h-4V17h4c2.760 0 5-2.240 5-5s-2.240-5-5-5z"/></svg>
<div class="lt" style="left:1985.48px;top:974px;font-size:25px;line-height:25px;color:#ffffff;transform:scaleX(1.0400);">42,000</div>
<div class="lt" style="left:2166.74px;top:974px;font-size:25px;line-height:25px;color:#ffffff;transform:scaleX(1.0320);">$1.00</div>
<div class="lt" style="left:2295.44px;top:974px;font-size:25px;line-height:25px;color:#ffffff;transform:scaleX(1.0340);">$42,000.00</div>
<div class="lt" style="left:2514.41px;top:974px;font-size:25px;line-height:25px;color:#ffffff;transform:scaleX(1.0320);">-</div>
<div class="lt" style="left:2837.91px;top:974px;font-size:25px;line-height:25px;color:#ffffff;transform:scaleX(1.0320);">-</div>
<div class="lt" style="left:3001.41px;top:974px;font-size:25px;line-height:25px;color:#ffffff;transform:scaleX(1.0320);">-</div>
<div class="lt" style="left:3074.14px;top:974px;font-size:25px;line-height:25px;color:#ffffff;transform:scaleX(1.0340);">$42,000.00</div>
<div class="lt" style="left:3219.63px;top:974px;font-size:25px;line-height:25px;color:#ffffff;transform:scaleX(1.0400);">$429,072.44</div>
<div class="lt" style="left:3380.88px;top:974px;font-size:25px;line-height:25px;color:#ffffff;transform:scaleX(1.0320);">02/05/25</div>
<div style="left:3498.70px;top:974px;font-size:25px;line-height:25px;color:#cedc47;font-weight:700;transform:scaleX(1.0254);">Booked</div>
<svg class="i" style="left:3625px;top:970px;width:32px;height:33px;fill:#fff;" viewBox="0 0 32 33"><path transform="translate(0.000 0.200) scale(1.33333)" d="M3 17.250V21h3.750L17.810 9.940l-3.750-3.750L3 17.250zM20.710 7.040c.39-.39.39-1.020 0-1.410l-2.340-2.340c-.39-.39-1.020-.39-1.410 0l-1.830 1.830 3.750 3.750 1.830-1.830z"/></svg>
<svg class="i" style="left:3728px;top:970px;width:32px;height:33px;fill:#747ec7;" viewBox="0 0 32 33"><path transform="translate(0.000 0.800) scale(1.33333)" d="M6 10c-1.100 0-2 .9-2 2s.9 2 2 2 2-.9 2-2-.9-2-2-2zm12 0c-1.100 0-2 .9-2 2s.9 2 2 2 2-.9 2-2-.9-2-2-2zm-6 0c-1.100 0-2 .9-2 2s.9 2 2 2 2-.9 2-2-.9-2-2-2z"/></svg>
<div style="left:448px;top:1022px;width:3344px;height:2px;background:#3f3f3f;"></div>
<svg class="i" style="left:477px;top:1039px;width:38px;height:38px;fill:#bdbdbd;" viewBox="0 0 38 38"><path transform="translate(0.250 0.450) scale(1.56250)" d="M19 5v14H5V5h14m0-2H5c-1.100 0-2 .9-2 2v14c0 1.100.9 2 2 2h14c1.100 0 2-.9 2-2V5c0-1.100-.9-2-2-2z"/></svg>
<a class="u" style="left:571.70px;top:1046px;font-size:25px;line-height:25px;color:#fff;font-weight:700;transform:scaleX(1.0300);">Manual</a>
<a class="u" style="left:719.50px;top:1046px;font-size:25px;line-height:25px;color:#fff;font-weight:700;transform:scaleX(1.0310);">Schwab Main</a>
<div class="lt" style="left:1101.30px;top:1046px;font-size:25px;line-height:25px;color:#ffffff;transform:scaleX(1.0360);">Transfer From: Schwab Main To: Goldman Sachs</div>
<div class="lt" style="left:1838.78px;top:1046px;font-size:25px;line-height:25px;color:#565656;transform:scaleX(1.0520);">Send</div>
<svg class="i" style="left:1805px;top:1045px;width:22px;height:34px" viewBox="0 0 22 34" fill="none" stroke="#646464" stroke-width="2.700" stroke-linejoin="miter"><path transform="translate(0.98 0.00)" d="M11.400 3.400L4 18.400h5.400L8.400 28.600l7.800-16.200h-5.600z"/></svg>
<svg class="i" style="left:1760px;top:1045px;width:33px;height:32px;fill:#646464;" viewBox="0 0 33 32"><path transform="translate(0.081 0.000) scale(1.33333)" d="M3.900 12c0-1.710 1.390-3.100 3.100-3.100h4V7H7c-2.760 0-5 2.240-5 5s2.240 5 5 5h4v-1.900H7c-1.710 0-3.100-1.390-3.100-3.100zM8 13h8v-2H8v2zm9-6h-4v1.900h4c1.710 0 3.100 1.390 3.100 3.100s-1.390 3.100-3.100 3.100h-4V17h4c2.760 0 5-2.240 5-5s-2.240-5-5-5z"/></svg>
<div class="lt" style="left:1952.98px;top:1046px;font-size:25px;line-height:25px;color:#ffffff;transform:scaleX(1.0470);">( 42,000 )</div>
<div class="lt" style="left:2166.74px;top:1046px;font-size:25px;line-height:25px;color:#ffffff;transform:scaleX(1.0320);">$1.00</div>
<div class="lt" style="left:2261.84px;top:1046px;font-size:25px;line-height:25px;color:#ffffff;transform:scaleX(1.0470);">( $42,000.00 )</div>
<div class="lt" style="left:2514.41px;top:1046px;font-size:25px;line-height:25px;color:#ffffff;transform:scaleX(1.0320);">-</div>
<div class="lt" style="left:2837.91px;top:1046px;font-size:25px;line-height:25px;color:#ffffff;transform:scaleX(1.0320);">-</div>
<div class="lt" style="left:3001.41px;top:1046px;font-size:25px;line-height:25px;color:#ffffff;transform:scaleX(1.0320);">-</div>
<div class="lt" style="left:3040.54px;top:1046px;font-size:25px;line-height:25px;color:#ffffff;transform:scaleX(1.0470);">( $42,000.00 )</div>
<div class="lt" style="left:3219.63px;top:1046px;font-size:25px;line-height:25px;color:#ffffff;transform:scaleX(1.0400);">$387,072.44</div>
<div class="lt" style="left:3380.88px;top:1046px;font-size:25px;line-height:25px;color:#ffffff;transform:scaleX(1.0320);">02/05/25</div>
<div style="left:3498.70px;top:1046px;font-size:25px;line-height:25px;color:#cedc47;font-weight:700;transform:scaleX(1.0254);">Booked</div>
<svg class="i" style="left:3625px;top:1042px;width:32px;height:33px;fill:#fff;" viewBox="0 0 32 33"><path transform="translate(0.000 0.200) scale(1.33333)" d="M3 17.250V21h3.750L17.810 9.940l-3.750-3.750L3 17.250zM20.710 7.040c.39-.39.39-1.020 0-1.410l-2.340-2.340c-.39-.39-1.020-.39-1.410 0l-1.830 1.830 3.750 3.750 1.830-1.830z"/></svg>
<svg class="i" style="left:3728px;top:1042px;width:32px;height:33px;fill:#747ec7;" viewBox="0 0 32 33"><path transform="translate(0.000 0.800) scale(1.33333)" d="M6 10c-1.100 0-2 .9-2 2s.9 2 2 2 2-.9 2-2-.9-2-2-2zm12 0c-1.100 0-2 .9-2 2s.9 2 2 2 2-.9 2-2-.9-2-2-2zm-6 0c-1.100 0-2 .9-2 2s.9 2 2 2 2-.9 2-2-.9-2-2-2z"/></svg>
<div style="left:448px;top:1094px;width:3344px;height:2px;background:#3f3f3f;"></div>
<svg class="i" style="left:477px;top:1111px;width:38px;height:38px;fill:#bdbdbd;" viewBox="0 0 38 38"><path transform="translate(0.250 0.450) scale(1.56250)" d="M19 5v14H5V5h14m0-2H5c-1.100 0-2 .9-2 2v14c0 1.100.9 2 2 2h14c1.100 0 2-.9 2-2V5c0-1.100-.9-2-2-2z"/></svg>
<svg class="i" style="left:536px;top:1122px;width:20px;height:22px" viewBox="0 0 20 22"><circle cx="10" cy="10.75" r="6.700" fill="#dc5508"/></svg>
<a class="u" style="left:571.70px;top:1118px;font-size:25px;line-height:25px;color:#fff;font-weight:700;transform:scaleX(1.0300);">Manual</a>
<a class="u" style="left:719.50px;top:1118px;font-size:25px;line-height:25px;color:#fff;font-weight:700;transform:scaleX(1.0310);">Schwab Main</a>
<a class="u" style="left:938.50px;top:1118px;font-size:25px;line-height:25px;color:#fff;font-weight:700;transform:scaleX(1.0340);">978ee84e1b</a>
<div class="lt" style="left:1101.30px;top:1118px;font-size:25px;line-height:25px;color:#ffffff;transform:scaleX(1.0360);">Buy</div>
<div class="lt" style="left:1796.44px;top:1118px;font-size:25px;line-height:25px;color:#565656;transform:scaleX(1.0520);">Debit (B)</div>
<svg class="i" style="left:1757px;top:1125px;width:22px;height:18px" viewBox="0 0 22 18" fill="#646464"><g transform="translate(0.19 0.00)"><path d="M8.200 3v10L2 8z"/><circle cx="14.600" cy="8" r="2.900"/></g></svg>
<div class="lt" style="left:1954.92px;top:1118px;font-size:25px;line-height:25px;color:#ffffff;transform:scaleX(1.0470);">( 11,800 )</div>
<div class="lt" style="left:2166.74px;top:1118px;font-size:25px;line-height:25px;color:#ffffff;transform:scaleX(1.0320);">$1.00</div>
<div class="lt" style="left:2263.78px;top:1118px;font-size:25px;line-height:25px;color:#ffffff;transform:scaleX(1.0470);">( $11,800.00 )</div>
<div class="lt" style="left:2514.41px;top:1118px;font-size:25px;line-height:25px;color:#ffffff;transform:scaleX(1.0320);">-</div>
<div class="lt" style="left:2837.91px;top:1118px;font-size:25px;line-height:25px;color:#ffffff;transform:scaleX(1.0320);">-</div>
<div class="lt" style="left:3001.41px;top:1118px;font-size:25px;line-height:25px;color:#ffffff;transform:scaleX(1.0320);">-</div>
<div class="lt" style="left:3042.48px;top:1118px;font-size:25px;line-height:25px;color:#ffffff;transform:scaleX(1.0470);">( $11,800.00 )</div>
<div class="lt" style="left:3219.63px;top:1118px;font-size:25px;line-height:25px;color:#ffffff;transform:scaleX(1.0400);">$429,072.44</div>
<div class="lt" style="left:3380.88px;top:1118px;font-size:25px;line-height:25px;color:#ffffff;transform:scaleX(1.0320);">02/01/25</div>
<div style="left:3498.70px;top:1118px;font-size:25px;line-height:25px;color:#cedc47;font-weight:700;transform:scaleX(1.0254);">Booked</div>
<svg class="i" style="left:3625px;top:1114px;width:32px;height:33px;fill:#fff;" viewBox="0 0 32 33"><path transform="translate(0.000 0.200) scale(1.33333)" d="M3 17.250V21h3.750L17.810 9.940l-3.750-3.750L3 17.250zM20.710 7.040c.39-.39.39-1.020 0-1.410l-2.340-2.340c-.39-.39-1.020-.39-1.410 0l-1.830 1.830 3.750 3.750 1.830-1.830z"/></svg>
<svg class="i" style="left:3672px;top:1114px;width:33px;height:33px;fill:#fff;" viewBox="0 0 33 33"><path transform="translate(0.300 0.200) scale(1.33333)" d="M6 19c0 1.100.9 2 2 2h8c1.100 0 2-.9 2-2V7H6v12zM19 4h-3.500l-1-1h-5l-1 1H5v2h14V4z"/></svg>
<svg class="i" style="left:3728px;top:1114px;width:32px;height:33px;fill:#747ec7;" viewBox="0 0 32 33"><path transform="translate(0.000 0.800) scale(1.33333)" d="M6 10c-1.100 0-2 .9-2 2s.9 2 2 2 2-.9 2-2-.9-2-2-2zm12 0c-1.100 0-2 .9-2 2s.9 2 2 2 2-.9 2-2-.9-2-2-2zm-6 0c-1.100 0-2 .9-2 2s.9 2 2 2 2-.9 2-2-.9-2-2-2z"/></svg>
<div style="left:448px;top:1166px;width:3344px;height:2px;background:#3f3f3f;"></div>
<svg class="i" style="left:477px;top:1183px;width:38px;height:38px;fill:#bdbdbd;" viewBox="0 0 38 38"><path transform="translate(0.250 0.450) scale(1.56250)" d="M19 5v14H5V5h14m0-2H5c-1.100 0-2 .9-2 2v14c0 1.100.9 2 2 2h14c1.100 0 2-.9 2-2V5c0-1.100-.9-2-2-2z"/></svg>
<svg class="i" style="left:536px;top:1194px;width:20px;height:22px" viewBox="0 0 20 22"><circle cx="10" cy="10.75" r="6.700" fill="#dc5508"/></svg>
<a class="u" style="left:571.70px;top:1190px;font-size:25px;line-height:25px;color:#fff;font-weight:700;transform:scaleX(1.0300);">Manual</a>
<a class="u" style="left:719.50px;top:1190px;font-size:25px;line-height:25px;color:#fff;font-weight:700;transform:scaleX(1.0310);">Schwab Main</a>
<a class="u" style="left:938.50px;top:1190px;font-size:25px;line-height:25px;color:#fff;font-weight:700;transform:scaleX(1.0340);">7 Lots</a>
<div class="lt" style="left:1101.30px;top:1190px;font-size:25px;line-height:25px;color:#ffffff;transform:scaleX(1.0610);">Income</div>
<svg class="i" style="left:1196px;top:1189px;width:33px;height:32px;fill:#747ec7;" viewBox="0 0 33 32"><path transform="translate(0.577 0.000) scale(1.33333)" d="M14 17H4v2h10v-2zm6-8H4v2h16V9zM4 15h16v-2H4v2zM4 5v2h16V5H4z"/></svg>
<div class="lt" style="left:1813.96px;top:1190px;font-size:25px;line-height:25px;color:#565656;transform:scaleX(1.0520);">Income</div>
<svg class="i" style="left:1774px;top:1197px;width:22px;height:18px" viewBox="0 0 22 18" fill="#646464"><g transform="translate(0.71 0.00)"><path d="M8.200 3v10L2 8z"/><circle cx="14.600" cy="8" r="2.900"/></g></svg>
<div class="lt" style="left:1985.48px;top:1190px;font-size:25px;line-height:25px;color:#ffffff;transform:scaleX(1.0400);">12,419</div>
<div class="lt" style="left:2166.74px;top:1190px;font-size:25px;line-height:25px;color:#ffffff;transform:scaleX(1.0320);">$1.00</div>
<div class="lt" style="left:2295.44px;top:1190px;font-size:25px;line-height:25px;color:#ffffff;transform:scaleX(1.0340);">$12,419.00</div>
<div class="lt" style="left:2514.41px;top:1190px;font-size:25px;line-height:25px;color:#ffffff;transform:scaleX(1.0320);">-</div>
<div class="lt" style="left:2837.91px;top:1190px;font-size:25px;line-height:25px;color:#ffffff;transform:scaleX(1.0320);">-</div>
<div class="lt" style="left:3001.41px;top:1190px;font-size:25px;line-height:25px;color:#ffffff;transform:scaleX(1.0320);">-</div>
<div class="lt" style="left:3074.14px;top:1190px;font-size:25px;line-height:25px;color:#ffffff;transform:scaleX(1.0340);">$12,419.00</div>
<div class="lt" style="left:3219.63px;top:1190px;font-size:25px;line-height:25px;color:#ffffff;transform:scaleX(1.0400);">$440,872.44</div>
<div class="lt" style="left:3380.88px;top:1190px;font-size:25px;line-height:25px;color:#ffffff;transform:scaleX(1.0320);">01/30/25</div>
<div style="left:3498.70px;top:1190px;font-size:25px;line-height:25px;color:#cedc47;font-weight:700;transform:scaleX(1.0254);">Booked</div>
<svg class="i" style="left:3625px;top:1186px;width:32px;height:33px;fill:#fff;" viewBox="0 0 32 33"><path transform="translate(0.000 0.200) scale(1.33333)" d="M3 17.250V21h3.750L17.810 9.940l-3.750-3.750L3 17.250zM20.710 7.040c.39-.39.39-1.020 0-1.410l-2.340-2.340c-.39-.39-1.020-.39-1.410 0l-1.830 1.830 3.750 3.750 1.830-1.830z"/></svg>
<svg class="i" style="left:3672px;top:1186px;width:33px;height:33px;fill:#fff;" viewBox="0 0 33 33"><path transform="translate(0.300 0.200) scale(1.33333)" d="M6 19c0 1.100.9 2 2 2h8c1.100 0 2-.9 2-2V7H6v12zM19 4h-3.500l-1-1h-5l-1 1H5v2h14V4z"/></svg>
<svg class="i" style="left:3728px;top:1186px;width:32px;height:33px;fill:#747ec7;" viewBox="0 0 32 33"><path transform="translate(0.000 0.800) scale(1.33333)" d="M6 10c-1.100 0-2 .9-2 2s.9 2 2 2 2-.9 2-2-.9-2-2-2zm12 0c-1.100 0-2 .9-2 2s.9 2 2 2 2-.9 2-2-.9-2-2-2zm-6 0c-1.100 0-2 .9-2 2s.9 2 2 2 2-.9 2-2-.9-2-2-2z"/></svg>
<div style="left:448px;top:1238px;width:3344px;height:2px;background:#3f3f3f;"></div>
<svg class="i" style="left:477px;top:1255px;width:38px;height:38px;fill:#bdbdbd;" viewBox="0 0 38 38"><path transform="translate(0.250 0.450) scale(1.56250)" d="M19 5v14H5V5h14m0-2H5c-1.100 0-2 .9-2 2v14c0 1.100.9 2 2 2h14c1.100 0 2-.9 2-2V5c0-1.100-.9-2-2-2z"/></svg>
<a class="u" style="left:571.70px;top:1262px;font-size:25px;line-height:25px;color:#fff;font-weight:700;transform:scaleX(1.0300);">Extension</a>
<a class="u" style="left:719.50px;top:1262px;font-size:25px;line-height:25px;color:#fff;font-weight:700;transform:scaleX(1.0310);">Schwab Main</a>
<a class="u" style="left:938.50px;top:1262px;font-size:25px;line-height:25px;color:#fff;font-weight:700;transform:scaleX(1.0340);">9bf34e0786</a>
<div class="lt" style="left:1101.30px;top:1262px;font-size:25px;line-height:25px;color:#ffffff;transform:scaleX(1.0570);">Coupon</div>
<svg class="i" style="left:1202px;top:1261px;width:33px;height:32px;fill:#747ec7;" viewBox="0 0 33 32"><path transform="translate(0.158 0.000) scale(1.33333)" d="M14 17H4v2h10v-2zm6-8H4v2h16V9zM4 15h16v-2H4v2zM4 5v2h16V5H4z"/></svg>
<div class="lt" style="left:1813.96px;top:1262px;font-size:25px;line-height:25px;color:#565656;transform:scaleX(1.0520);">Income</div>
<svg class="i" style="left:1779px;top:1261px;width:22px;height:34px" viewBox="0 0 22 34" fill="none" stroke="#646464" stroke-width="2.700" stroke-linejoin="miter"><path transform="translate(0.46 0.00)" d="M11.400 3.400L4 18.400h5.400L8.400 28.600l7.800-16.200h-5.600z"/></svg>
<svg class="i" style="left:1735px;top:1269px;width:22px;height:18px" viewBox="0 0 22 18" fill="#646464"><g transform="translate(0.46 0.00)"><path d="M8.200 3v10L2 8z"/><circle cx="14.600" cy="8" r="2.900"/></g></svg>
<div class="lt" style="left:1985.48px;top:1262px;font-size:25px;line-height:25px;color:#ffffff;transform:scaleX(1.0400);">76,500</div>
<div class="lt" style="left:2166.74px;top:1262px;font-size:25px;line-height:25px;color:#ffffff;transform:scaleX(1.0320);">$1.00</div>
<div class="lt" style="left:2295.44px;top:1262px;font-size:25px;line-height:25px;color:#ffffff;transform:scaleX(1.0340);">$76,500.00</div>
<div class="lt" style="left:2514.41px;top:1262px;font-size:25px;line-height:25px;color:#ffffff;transform:scaleX(1.0320);">-</div>
<div class="lt" style="left:2837.91px;top:1262px;font-size:25px;line-height:25px;color:#ffffff;transform:scaleX(1.0320);">-</div>
<div class="lt" style="left:3001.41px;top:1262px;font-size:25px;line-height:25px;color:#ffffff;transform:scaleX(1.0320);">-</div>
<div class="lt" style="left:3074.14px;top:1262px;font-size:25px;line-height:25px;color:#ffffff;transform:scaleX(1.0340);">$76,500.00</div>
<div class="lt" style="left:3219.63px;top:1262px;font-size:25px;line-height:25px;color:#ffffff;transform:scaleX(1.0400);">$428,453.44</div>
<div class="lt" style="left:3380.88px;top:1262px;font-size:25px;line-height:25px;color:#ffffff;transform:scaleX(1.0320);">12/31/24</div>
<div style="left:3498.70px;top:1262px;font-size:25px;line-height:25px;color:#cedc47;font-weight:700;transform:scaleX(1.0254);">Booked</div>
<svg class="i" style="left:3625px;top:1258px;width:32px;height:33px;fill:#fff;" viewBox="0 0 32 33"><path transform="translate(0.000 0.200) scale(1.33333)" d="M3 17.250V21h3.750L17.810 9.940l-3.750-3.750L3 17.250zM20.710 7.040c.39-.39.39-1.020 0-1.410l-2.340-2.340c-.39-.39-1.020-.39-1.410 0l-1.830 1.830 3.750 3.750 1.830-1.830z"/></svg>
<svg class="i" style="left:3728px;top:1258px;width:32px;height:33px;fill:#747ec7;" viewBox="0 0 32 33"><path transform="translate(0.000 0.800) scale(1.33333)" d="M6 10c-1.100 0-2 .9-2 2s.9 2 2 2 2-.9 2-2-.9-2-2-2zm12 0c-1.100 0-2 .9-2 2s.9 2 2 2 2-.9 2-2-.9-2-2-2zm-6 0c-1.100 0-2 .9-2 2s.9 2 2 2 2-.9 2-2-.9-2-2-2z"/></svg>
<div style="left:448px;top:1310px;width:3344px;height:2px;background:#3f3f3f;"></div>
<svg class="i" style="left:477px;top:1327px;width:38px;height:38px;fill:#bdbdbd;" viewBox="0 0 38 38"><path transform="translate(0.250 0.450) scale(1.56250)" d="M19 5v14H5V5h14m0-2H5c-1.100 0-2 .9-2 2v14c0 1.100.9 2 2 2h14c1.100 0 2-.9 2-2V5c0-1.100-.9-2-2-2z"/></svg>
<svg class="i" style="left:536px;top:1338px;width:20px;height:22px" viewBox="0 0 20 22"><circle cx="10" cy="10.75" r="6.700" fill="#dc5508"/></svg>
<a class="u" style="left:571.70px;top:1334px;font-size:25px;line-height:25px;color:#fff;font-weight:700;transform:scaleX(1.0300);">Manual</a>
<a class="u" style="left:719.50px;top:1334px;font-size:25px;line-height:25px;color:#fff;font-weight:700;transform:scaleX(1.0310);">Schwab Main</a>
<a class="u" style="left:938.50px;top:1334px;font-size:25px;line-height:25px;color:#fff;font-weight:700;transform:scaleX(1.0340);">7 Lots</a>
<div class="lt" style="left:1101.30px;top:1334px;font-size:25px;line-height:25px;color:#ffffff;transform:scaleX(1.0610);">Income</div>
<svg class="i" style="left:1196px;top:1333px;width:33px;height:32px;fill:#747ec7;" viewBox="0 0 33 32"><path transform="translate(0.577 0.000) scale(1.33333)" d="M14 17H4v2h10v-2zm6-8H4v2h16V9zM4 15h16v-2H4v2zM4 5v2h16V5H4z"/></svg>
<div class="lt" style="left:1813.96px;top:1334px;font-size:25px;line-height:25px;color:#565656;transform:scaleX(1.0520);">Income</div>
<svg class="i" style="left:1774px;top:1341px;width:22px;height:18px" viewBox="0 0 22 18" fill="#646464"><g transform="translate(0.71 0.00)"><path d="M8.200 3v10L2 8z"/><circle cx="14.600" cy="8" r="2.900"/></g></svg>
<div class="lt" style="left:1985.48px;top:1334px;font-size:25px;line-height:25px;color:#ffffff;transform:scaleX(1.0400);">12,378</div>
<div class="lt" style="left:2166.74px;top:1334px;font-size:25px;line-height:25px;color:#ffffff;transform:scaleX(1.0320);">$1.00</div>
<div class="lt" style="left:2295.44px;top:1334px;font-size:25px;line-height:25px;color:#ffffff;transform:scaleX(1.0340);">$12,378.00</div>
<div class="lt" style="left:2514.41px;top:1334px;font-size:25px;line-height:25px;color:#ffffff;transform:scaleX(1.0320);">-</div>
<div class="lt" style="left:2837.91px;top:1334px;font-size:25px;line-height:25px;color:#ffffff;transform:scaleX(1.0320);">-</div>
<div class="lt" style="left:3001.41px;top:1334px;font-size:25px;line-height:25px;color:#ffffff;transform:scaleX(1.0320);">-</div>
<div class="lt" style="left:3074.14px;top:1334px;font-size:25px;line-height:25px;color:#ffffff;transform:scaleX(1.0340);">$12,378.00</div>
<div class="lt" style="left:3219.63px;top:1334px;font-size:25px;line-height:25px;color:#ffffff;transform:scaleX(1.0400);">$351,953.44</div>
<div class="lt" style="left:3380.88px;top:1334px;font-size:25px;line-height:25px;color:#ffffff;transform:scaleX(1.0320);">10/30/24</div>
<div style="left:3498.70px;top:1334px;font-size:25px;line-height:25px;color:#cedc47;font-weight:700;transform:scaleX(1.0254);">Booked</div>
<svg class="i" style="left:3625px;top:1330px;width:32px;height:33px;fill:#fff;" viewBox="0 0 32 33"><path transform="translate(0.000 0.200) scale(1.33333)" d="M3 17.250V21h3.750L17.810 9.940l-3.750-3.750L3 17.250zM20.710 7.040c.39-.39.39-1.020 0-1.410l-2.340-2.340c-.39-.39-1.020-.39-1.410 0l-1.830 1.830 3.750 3.750 1.830-1.830z"/></svg>
<svg class="i" style="left:3672px;top:1330px;width:33px;height:33px;fill:#fff;" viewBox="0 0 33 33"><path transform="translate(0.300 0.200) scale(1.33333)" d="M6 19c0 1.100.9 2 2 2h8c1.100 0 2-.9 2-2V7H6v12zM19 4h-3.500l-1-1h-5l-1 1H5v2h14V4z"/></svg>
<svg class="i" style="left:3728px;top:1330px;width:32px;height:33px;fill:#747ec7;" viewBox="0 0 32 33"><path transform="translate(0.000 0.800) scale(1.33333)" d="M6 10c-1.100 0-2 .9-2 2s.9 2 2 2 2-.9 2-2-.9-2-2-2zm12 0c-1.100 0-2 .9-2 2s.9 2 2 2 2-.9 2-2-.9-2-2-2zm-6 0c-1.100 0-2 .9-2 2s.9 2 2 2 2-.9 2-2-.9-2-2-2z"/></svg>
<div style="left:448px;top:1382px;width:3344px;height:2px;background:#3f3f3f;"></div>
<svg class="i" style="left:477px;top:1399px;width:38px;height:38px;fill:#bdbdbd;" viewBox="0 0 38 38"><path transform="translate(0.250 0.450) scale(1.56250)" d="M19 5v14H5V5h14m0-2H5c-1.100 0-2 .9-2 2v14c0 1.100.9 2 2 2h14c1.100 0 2-.9 2-2V5c0-1.100-.9-2-2-2z"/></svg>
<a class="u" style="left:571.70px;top:1406px;font-size:25px;line-height:25px;color:#fff;font-weight:700;transform:scaleX(1.0300);">Extension</a>
<a class="u" style="left:719.50px;top:1406px;font-size:25px;line-height:25px;color:#fff;font-weight:700;transform:scaleX(1.0310);">JP Morgan</a>
<a class="u" style="left:938.50px;top:1406px;font-size:25px;line-height:25px;color:#fff;font-weight:700;transform:scaleX(1.0340);">6629fad8b2</a>
<div class="lt" style="left:1101.30px;top:1406px;font-size:25px;line-height:25px;color:#ffffff;transform:scaleX(1.0639);">Contribution Inside</div>
<div class="lt" style="left:1796.44px;top:1406px;font-size:25px;line-height:25px;color:#565656;transform:scaleX(1.0520);">Debit (B)</div>
<svg class="i" style="left:1761px;top:1405px;width:22px;height:34px" viewBox="0 0 22 34" fill="none" stroke="#646464" stroke-width="2.700" stroke-linejoin="miter"><path transform="translate(0.94 0.00)" d="M11.400 3.400L4 18.400h5.400L8.400 28.600l7.800-16.200h-5.600z"/></svg>
<svg class="i" style="left:1717px;top:1413px;width:22px;height:18px" viewBox="0 0 22 18" fill="#646464"><g transform="translate(0.94 0.00)"><path d="M8.200 3v10L2 8z"/><circle cx="14.600" cy="8" r="2.900"/></g></svg>
<div class="lt" style="left:1952.98px;top:1406px;font-size:25px;line-height:25px;color:#ffffff;transform:scaleX(1.0470);">( 34,000 )</div>
<div class="lt" style="left:2166.74px;top:1406px;font-size:25px;line-height:25px;color:#ffffff;transform:scaleX(1.0320);">$1.00</div>
<div class="lt" style="left:2261.84px;top:1406px;font-size:25px;line-height:25px;color:#ffffff;transform:scaleX(1.0470);">( $34,000.00 )</div>
<div class="lt" style="left:2514.41px;top:1406px;font-size:25px;line-height:25px;color:#ffffff;transform:scaleX(1.0320);">-</div>
<div class="lt" style="left:2837.91px;top:1406px;font-size:25px;line-height:25px;color:#ffffff;transform:scaleX(1.0320);">-</div>
<div class="lt" style="left:3001.41px;top:1406px;font-size:25px;line-height:25px;color:#ffffff;transform:scaleX(1.0320);">-</div>
<div class="lt" style="left:3040.54px;top:1406px;font-size:25px;line-height:25px;color:#ffffff;transform:scaleX(1.0470);">( $34,000.00 )</div>
<div class="lt" style="left:3219.63px;top:1406px;font-size:25px;line-height:25px;color:#ffffff;transform:scaleX(1.0400);">$339,575.44</div>
<div class="lt" style="left:3380.88px;top:1406px;font-size:25px;line-height:25px;color:#ffffff;transform:scaleX(1.0320);">09/24/24</div>
<div style="left:3498.70px;top:1406px;font-size:25px;line-height:25px;color:#cedc47;font-weight:700;transform:scaleX(1.0254);">Booked</div>
<svg class="i" style="left:3625px;top:1402px;width:32px;height:33px;fill:#fff;" viewBox="0 0 32 33"><path transform="translate(0.000 0.200) scale(1.33333)" d="M3 17.250V21h3.750L17.810 9.940l-3.750-3.750L3 17.250zM20.710 7.040c.39-.39.39-1.020 0-1.410l-2.340-2.340c-.39-.39-1.020-.39-1.410 0l-1.830 1.830 3.750 3.750 1.830-1.830z"/></svg>
<svg class="i" style="left:3728px;top:1402px;width:32px;height:33px;fill:#747ec7;" viewBox="0 0 32 33"><path transform="translate(0.000 0.800) scale(1.33333)" d="M6 10c-1.100 0-2 .9-2 2s.9 2 2 2 2-.9 2-2-.9-2-2-2zm12 0c-1.100 0-2 .9-2 2s.9 2 2 2 2-.9 2-2-.9-2-2-2zm-6 0c-1.100 0-2 .9-2 2s.9 2 2 2 2-.9 2-2-.9-2-2-2z"/></svg>
<div style="left:448px;top:1454px;width:3344px;height:2px;background:#3f3f3f;"></div>
<svg class="i" style="left:477px;top:1471px;width:38px;height:38px;fill:#bdbdbd;" viewBox="0 0 38 38"><path transform="translate(0.250 0.450) scale(1.56250)" d="M19 5v14H5V5h14m0-2H5c-1.100 0-2 .9-2 2v14c0 1.100.9 2 2 2h14c1.100 0 2-.9 2-2V5c0-1.100-.9-2-2-2z"/></svg>
<svg class="i" style="left:536px;top:1482px;width:20px;height:22px" viewBox="0 0 20 22"><circle cx="10" cy="10.75" r="6.700" fill="#dc5508"/></svg>
<a class="u" style="left:571.70px;top:1478px;font-size:25px;line-height:25px;color:#fff;font-weight:700;transform:scaleX(1.0300);">Manual</a>
<a class="u" style="left:719.50px;top:1478px;font-size:25px;line-height:25px;color:#fff;font-weight:700;transform:scaleX(1.0310);">Merrill Lynch</a>
<a class="u" style="left:938.50px;top:1478px;font-size:25px;line-height:25px;color:#fff;font-weight:700;transform:scaleX(1.0340);">bd703515aa</a>
<div class="lt" style="left:1101.30px;top:1478px;font-size:25px;line-height:25px;color:#ffffff;transform:scaleX(1.0360);">Buy</div>
<div class="lt" style="left:1796.44px;top:1478px;font-size:25px;line-height:25px;color:#565656;transform:scaleX(1.0520);">Debit (B)</div>
<svg class="i" style="left:1757px;top:1485px;width:22px;height:18px" viewBox="0 0 22 18" fill="#646464"><g transform="translate(0.19 0.00)"><path d="M8.200 3v10L2 8z"/><circle cx="14.600" cy="8" r="2.900"/></g></svg>
<div class="lt" style="left:1952.98px;top:1478px;font-size:25px;line-height:25px;color:#ffffff;transform:scaleX(1.0470);">( 47,600 )</div>
<div class="lt" style="left:2166.74px;top:1478px;font-size:25px;line-height:25px;color:#ffffff;transform:scaleX(1.0320);">$1.00</div>
<div class="lt" style="left:2261.84px;top:1478px;font-size:25px;line-height:25px;color:#ffffff;transform:scaleX(1.0470);">( $47,600.00 )</div>
<div class="lt" style="left:2514.41px;top:1478px;font-size:25px;line-height:25px;color:#ffffff;transform:scaleX(1.0320);">-</div>
<div class="lt" style="left:2837.91px;top:1478px;font-size:25px;line-height:25px;color:#ffffff;transform:scaleX(1.0320);">-</div>
<div class="lt" style="left:3001.41px;top:1478px;font-size:25px;line-height:25px;color:#ffffff;transform:scaleX(1.0320);">-</div>
<div class="lt" style="left:3040.54px;top:1478px;font-size:25px;line-height:25px;color:#ffffff;transform:scaleX(1.0470);">( $47,600.00 )</div>
<div class="lt" style="left:3219.63px;top:1478px;font-size:25px;line-height:25px;color:#ffffff;transform:scaleX(1.0400);">$373,575.44</div>
<div class="lt" style="left:3380.88px;top:1478px;font-size:25px;line-height:25px;color:#ffffff;transform:scaleX(1.0320);">09/02/24</div>
<div style="left:3498.70px;top:1478px;font-size:25px;line-height:25px;color:#cedc47;font-weight:700;transform:scaleX(1.0254);">Booked</div>
<svg class="i" style="left:3625px;top:1474px;width:32px;height:33px;fill:#fff;" viewBox="0 0 32 33"><path transform="translate(0.000 0.200) scale(1.33333)" d="M3 17.250V21h3.750L17.810 9.940l-3.750-3.750L3 17.250zM20.710 7.040c.39-.39.39-1.020 0-1.410l-2.340-2.340c-.39-.39-1.020-.39-1.410 0l-1.830 1.830 3.750 3.750 1.830-1.830z"/></svg>
<svg class="i" style="left:3672px;top:1474px;width:33px;height:33px;fill:#fff;" viewBox="0 0 33 33"><path transform="translate(0.300 0.200) scale(1.33333)" d="M6 19c0 1.100.9 2 2 2h8c1.100 0 2-.9 2-2V7H6v12zM19 4h-3.500l-1-1h-5l-1 1H5v2h14V4z"/></svg>
<svg class="i" style="left:3728px;top:1474px;width:32px;height:33px;fill:#747ec7;" viewBox="0 0 32 33"><path transform="translate(0.000 0.800) scale(1.33333)" d="M6 10c-1.100 0-2 .9-2 2s.9 2 2 2 2-.9 2-2-.9-2-2-2zm12 0c-1.100 0-2 .9-2 2s.9 2 2 2 2-.9 2-2-.9-2-2-2zm-6 0c-1.100 0-2 .9-2 2s.9 2 2 2 2-.9 2-2-.9-2-2-2z"/></svg>
<div style="left:448px;top:1526px;width:3344px;height:2px;background:#3f3f3f;"></div>
<svg class="i" style="left:477px;top:1543px;width:38px;height:38px;fill:#bdbdbd;" viewBox="0 0 38 38"><path transform="translate(0.250 0.450) scale(1.56250)" d="M19 5v14H5V5h14m0-2H5c-1.100 0-2 .9-2 2v14c0 1.100.9 2 2 2h14c1.100 0 2-.9 2-2V5c0-1.100-.9-2-2-2z"/></svg>
<a class="u" style="left:571.70px;top:1550px;font-size:25px;line-height:25px;color:#fff;font-weight:700;transform:scaleX(1.0300);">Manual</a>
<a class="u" style="left:719.50px;top:1550px;font-size:25px;line-height:25px;color:#fff;font-weight:700;transform:scaleX(1.0310);">Merrill Lynch</a>
<div class="lt" style="left:1101.30px;top:1550px;font-size:25px;line-height:25px;color:#ffffff;transform:scaleX(1.0390);">Transfer From: Schwab Main To: Merrill Lynch</div>
<div class="lt" style="left:1805.19px;top:1550px;font-size:25px;line-height:25px;color:#565656;transform:scaleX(1.0520);">Receive</div>
<svg class="i" style="left:1772px;top:1549px;width:22px;height:34px" viewBox="0 0 22 34" fill="none" stroke="#646464" stroke-width="2.700" stroke-linejoin="miter"><path transform="translate(0.39 0.00)" d="M11.400 3.400L4 18.400h5.400L8.400 28.600l7.800-16.200h-5.600z"/></svg>
<svg class="i" style="left:1726px;top:1549px;width:33px;height:32px;fill:#646464;" viewBox="0 0 33 32"><path transform="translate(0.487 0.000) scale(1.33333)" d="M3.900 12c0-1.710 1.390-3.100 3.100-3.100h4V7H7c-2.760 0-5 2.240-5 5s2.240 5 5 5h4v-1.900H7c-1.710 0-3.100-1.390-3.100-3.100zM8 13h8v-2H8v2zm9-6h-4v1.900h4c1.710 0 3.100 1.390 3.100 3.100s-1.390 3.100-3.100 3.100h-4V17h4c2.760 0 5-2.240 5-5s-2.240-5-5-5z"/></svg>
<div class="lt" style="left:1985.48px;top:1550px;font-size:25px;line-height:25px;color:#ffffff;transform:scaleX(1.0400);">50,000</div>
<div class="lt" style="left:2166.74px;top:1550px;font-size:25px;line-height:25px;color:#ffffff;transform:scaleX(1.0320);">$1.00</div>
<div class="lt" style="left:2295.44px;top:1550px;font-size:25px;line-height:25px;color:#ffffff;transform:scaleX(1.0340);">$50,000.00</div>
<div class="lt" style="left:2514.41px;top:1550px;font-size:25px;line-height:25px;color:#ffffff;transform:scaleX(1.0320);">-</div>
<div class="lt" style="left:2837.91px;top:1550px;font-size:25px;line-height:25px;color:#ffffff;transform:scaleX(1.0320);">-</div>
<div class="lt" style="left:3001.41px;top:1550px;font-size:25px;line-height:25px;color:#ffffff;transform:scaleX(1.0320);">-</div>
<div class="lt" style="left:3074.14px;top:1550px;font-size:25px;line-height:25px;color:#ffffff;transform:scaleX(1.0340);">$50,000.00</div>
<div class="lt" style="left:3219.63px;top:1550px;font-size:25px;line-height:25px;color:#ffffff;transform:scaleX(1.0400);">$421,175.44</div>
<div class="lt" style="left:3380.88px;top:1550px;font-size:25px;line-height:25px;color:#ffffff;transform:scaleX(1.0320);">09/01/24</div>
<div style="left:3498.70px;top:1550px;font-size:25px;line-height:25px;color:#cedc47;font-weight:700;transform:scaleX(1.0254);">Booked</div>
<svg class="i" style="left:3625px;top:1546px;width:32px;height:33px;fill:#fff;" viewBox="0 0 32 33"><path transform="translate(0.000 0.200) scale(1.33333)" d="M3 17.250V21h3.750L17.810 9.940l-3.750-3.750L3 17.250zM20.710 7.040c.39-.39.39-1.020 0-1.410l-2.340-2.340c-.39-.39-1.020-.39-1.410 0l-1.830 1.830 3.750 3.750 1.830-1.830z"/></svg>
<svg class="i" style="left:3728px;top:1546px;width:32px;height:33px;fill:#747ec7;" viewBox="0 0 32 33"><path transform="translate(0.000 0.800) scale(1.33333)" d="M6 10c-1.100 0-2 .9-2 2s.9 2 2 2 2-.9 2-2-.9-2-2-2zm12 0c-1.100 0-2 .9-2 2s.9 2 2 2 2-.9 2-2-.9-2-2-2zm-6 0c-1.100 0-2 .9-2 2s.9 2 2 2 2-.9 2-2-.9-2-2-2z"/></svg>
<div style="left:448px;top:1598px;width:3344px;height:2px;background:#3f3f3f;"></div>
<svg class="i" style="left:477px;top:1616px;width:38px;height:38px;fill:#bdbdbd;" viewBox="0 0 38 38"><path transform="translate(0.250 0.450) scale(1.56250)" d="M19 5v14H5V5h14m0-2H5c-1.100 0-2 .9-2 2v14c0 1.100.9 2 2 2h14c1.100 0 2-.9 2-2V5c0-1.100-.9-2-2-2z"/></svg>
<a class="u" style="left:571.70px;top:1623px;font-size:25px;line-height:25px;color:#fff;font-weight:700;transform:scaleX(1.0300);">Manual</a>
<a class="u" style="left:719.50px;top:1623px;font-size:25px;line-height:25px;color:#fff;font-weight:700;transform:scaleX(1.0310);">Schwab Main</a>
<div class="lt" style="left:1101.30px;top:1623px;font-size:25px;line-height:25px;color:#ffffff;transform:scaleX(1.0390);">Transfer From: Schwab Main To: Merrill Lynch</div>
<div class="lt" style="left:1838.78px;top:1623px;font-size:25px;line-height:25px;color:#565656;transform:scaleX(1.0520);">Send</div>
<svg class="i" style="left:1805px;top:1622px;width:22px;height:34px" viewBox="0 0 22 34" fill="none" stroke="#646464" stroke-width="2.700" stroke-linejoin="miter"><path transform="translate(0.98 0.00)" d="M11.400 3.400L4 18.400h5.400L8.400 28.600l7.800-16.200h-5.600z"/></svg>
<svg class="i" style="left:1760px;top:1622px;width:33px;height:32px;fill:#646464;" viewBox="0 0 33 32"><path transform="translate(0.081 0.000) scale(1.33333)" d="M3.900 12c0-1.710 1.390-3.100 3.100-3.100h4V7H7c-2.760 0-5 2.240-5 5s2.240 5 5 5h4v-1.900H7c-1.710 0-3.100-1.390-3.100-3.100zM8 13h8v-2H8v2zm9-6h-4v1.900h4c1.710 0 3.100 1.390 3.100 3.100s-1.390 3.100-3.100 3.100h-4V17h4c2.760 0 5-2.240 5-5s-2.240-5-5-5z"/></svg>
<div class="lt" style="left:1952.98px;top:1623px;font-size:25px;line-height:25px;color:#ffffff;transform:scaleX(1.0470);">( 50,000 )</div>
<div class="lt" style="left:2166.74px;top:1623px;font-size:25px;line-height:25px;color:#ffffff;transform:scaleX(1.0320);">$1.00</div>
<div class="lt" style="left:2261.84px;top:1623px;font-size:25px;line-height:25px;color:#ffffff;transform:scaleX(1.0470);">( $50,000.00 )</div>
<div class="lt" style="left:2514.41px;top:1623px;font-size:25px;line-height:25px;color:#ffffff;transform:scaleX(1.0320);">-</div>
<div class="lt" style="left:2837.91px;top:1623px;font-size:25px;line-height:25px;color:#ffffff;transform:scaleX(1.0320);">-</div>
<div class="lt" style="left:3001.41px;top:1623px;font-size:25px;line-height:25px;color:#ffffff;transform:scaleX(1.0320);">-</div>
<div class="lt" style="left:3040.54px;top:1623px;font-size:25px;line-height:25px;color:#ffffff;transform:scaleX(1.0470);">( $50,000.00 )</div>
<div class="lt" style="left:3219.63px;top:1623px;font-size:25px;line-height:25px;color:#ffffff;transform:scaleX(1.0400);">$371,175.44</div>
<div class="lt" style="left:3380.88px;top:1623px;font-size:25px;line-height:25px;color:#ffffff;transform:scaleX(1.0320);">09/01/24</div>
<div style="left:3498.70px;top:1623px;font-size:25px;line-height:25px;color:#cedc47;font-weight:700;transform:scaleX(1.0254);">Booked</div>
<svg class="i" style="left:3625px;top:1619px;width:32px;height:33px;fill:#fff;" viewBox="0 0 32 33"><path transform="translate(0.000 0.200) scale(1.33333)" d="M3 17.250V21h3.750L17.810 9.940l-3.750-3.750L3 17.250zM20.710 7.040c.39-.39.39-1.020 0-1.410l-2.340-2.340c-.39-.39-1.020-.39-1.410 0l-1.830 1.830 3.750 3.750 1.830-1.830z"/></svg>
<svg class="i" style="left:3728px;top:1619px;width:32px;height:33px;fill:#747ec7;" viewBox="0 0 32 33"><path transform="translate(0.000 0.800) scale(1.33333)" d="M6 10c-1.100 0-2 .9-2 2s.9 2 2 2 2-.9 2-2-.9-2-2-2zm12 0c-1.100 0-2 .9-2 2s.9 2 2 2 2-.9 2-2-.9-2-2-2zm-6 0c-1.100 0-2 .9-2 2s.9 2 2 2 2-.9 2-2-.9-2-2-2z"/></svg>
<div style="left:448px;top:1672px;width:3170px;height:2px;background:repeating-linear-gradient(90deg,#c6c6c6 0 6.500px,transparent 6.500px 12px);"></div>
<div style="left:1768.64px;top:1696px;font-size:25px;line-height:25px;color:#fff;font-weight:700;transform:scaleX(1.0340);">212,849.66</div>
<div style="left:2413.39px;top:1696px;font-size:25px;line-height:25px;color:#fff;font-weight:700;transform:scaleX(1.0340);">-</div>
<div style="left:2700.39px;top:1696px;font-size:25px;line-height:25px;color:#fff;font-weight:700;transform:scaleX(1.0340);">-</div>
<div style="left:2864.26px;top:1696px;font-size:25px;line-height:25px;color:#fff;font-weight:700;transform:scaleX(1.0340);">$212,849.66</div>
<div class="lt" style="left:495.90px;top:1787px;font-size:25px;line-height:25px;color:#ffffff;transform:scaleX(1.0500);">Transactions per page:</div>
<div style="left:780px;top:1772px;width:166px;height:69px;background:#212121;border-radius:6px;box-shadow:0 2px 4px rgba(0,0,0,.35);"></div>
<div class="lt" style="left:814.60px;top:1784px;font-size:30px;line-height:30px;color:#fff;transform:scaleX(1.0040);">15</div>
<svg class="i" style="left:872px;top:1776px;width:48px;height:48px;fill:#bdbdbd;" viewBox="0 0 48 48"><path transform="translate(0.000 0.000) scale(2.00000)" d="M7 10l5 5 5-5z"/></svg>
<div class="lt" style="left:961.70px;top:1787px;font-size:25px;line-height:25px;color:#ffffff;transform:scaleX(1.0269);">1-16 of 82</div>
<svg class="i" style="left:1093px;top:1780px;width:39px;height:39px;fill:#3a4352;" viewBox="0 0 39 39"><path transform="translate(0.800 0.400) scale(1.58333)" d="M18.410 16.590L13.820 12l4.590-4.590L17 6l-6 6 6 6zM6 6h2v12H6z"/></svg>
<svg class="i" style="left:1131px;top:1780px;width:39px;height:39px;fill:#3a4352;" viewBox="0 0 39 39"><path transform="translate(0.300 0.400) scale(1.58333)" d="M15.410 7.410L14 6l-6 6 6 6 1.410-1.410L10.830 12z"/></svg>
<svg class="i" style="left:1168px;top:1780px;width:39px;height:39px;fill:#737bc6;" viewBox="0 0 39 39"><path transform="translate(0.500 0.400) scale(1.58333)" d="M10 6L8.590 7.410 13.170 12l-4.580 4.590L10 18l6-6z"/></svg>
<svg class="i" style="left:1205px;top:1780px;width:39px;height:39px;fill:#737bc6;" viewBox="0 0 39 39"><path transform="translate(0.400 0.400) scale(1.58333)" d="M5.590 7.410L10.180 12l-4.590 4.590L7 18l6-6-6-6zM16 6h2v12h-2z"/></svg>
<div style="left:3288px;top:1786px;width:36px;height:36px;background:#00d8c5;border-radius:5px;"></div>
<svg class="i" style="left:3288px;top:1786px;width:36px;height:36px" viewBox="0 0 36 36" fill="none" stroke="#252525" stroke-width="4"><path d="M6 17.500l8.500 8.500L30 9.500"/></svg>
<div style="left:3331.30px;top:1786px;font-size:33px;line-height:33px;color:#fff;transform:scaleX(0.9754);">Accum View</div>
<svg class="i" style="left:3529px;top:1780px;width:48px;height:48px;fill:#bdbdbd;" viewBox="0 0 48 48"><path transform="translate(0.000 0.000) scale(2.00000)" d="M19 5v14H5V5h14m0-2H5c-1.100 0-2 .9-2 2v14c0 1.100.9 2 2 2h14c1.100 0 2-.9 2-2V5c0-1.100-.9-2-2-2z"/></svg>
<div style="left:3578.30px;top:1786px;font-size:33px;line-height:33px;color:#fff;transform:scaleX(0.9729);">Detail View</div>
<div style="left:400px;top:2096px;width:3440px;height:64px;background:#3f51b5;"></div>
<svg class="i" style="left:408px;top:2114px;width:32px;height:32px;fill:#fff;" viewBox="0 0 32 32"><path transform="translate(0.250 0.150) scale(1.31250)" d="M18 8h-1V6c0-2.760-2.240-5-5-5S7 3.240 7 6v2H6c-1.100 0-2 .9-2 2v10c0 1.100.9 2 2 2h12c1.100 0 2-.9 2-2V10c0-1.100-.9-2-2-2zm-6 9c-1.100 0-2-.9-2-2s.9-2 2-2 2 .9 2 2-.9 2-2 2zm3.100-9H8.900V6c0-1.710 1.390-3.100 3.100-3.100 1.710 0 3.100 1.390 3.100 3.100v2z"/></svg>
<svg class="i" style="left:464px;top:2114px;width:32px;height:33px;fill:#fff;" viewBox="0 0 32 33"><path transform="translate(0.000 0.400) scale(1.33333)" d="M17 3H5c-1.110 0-2 .9-2 2v14c0 1.100.89 2 2 2h14c1.100 0 2-.9 2-2V7l-4-4zm-5 16c-1.660 0-3-1.340-3-3s1.340-3 3-3 3 1.340 3 3-1.340 3-3 3zm3-10H5V5h10v4z"/></svg>
<div style="left:504.50px;top:2118px;font-size:24px;line-height:24px;color:#fff;letter-spacing:1.781px;transform:scaleX(0.9500);">09/26/25 04:01:53 PM</div>
</div>
</body></html>
